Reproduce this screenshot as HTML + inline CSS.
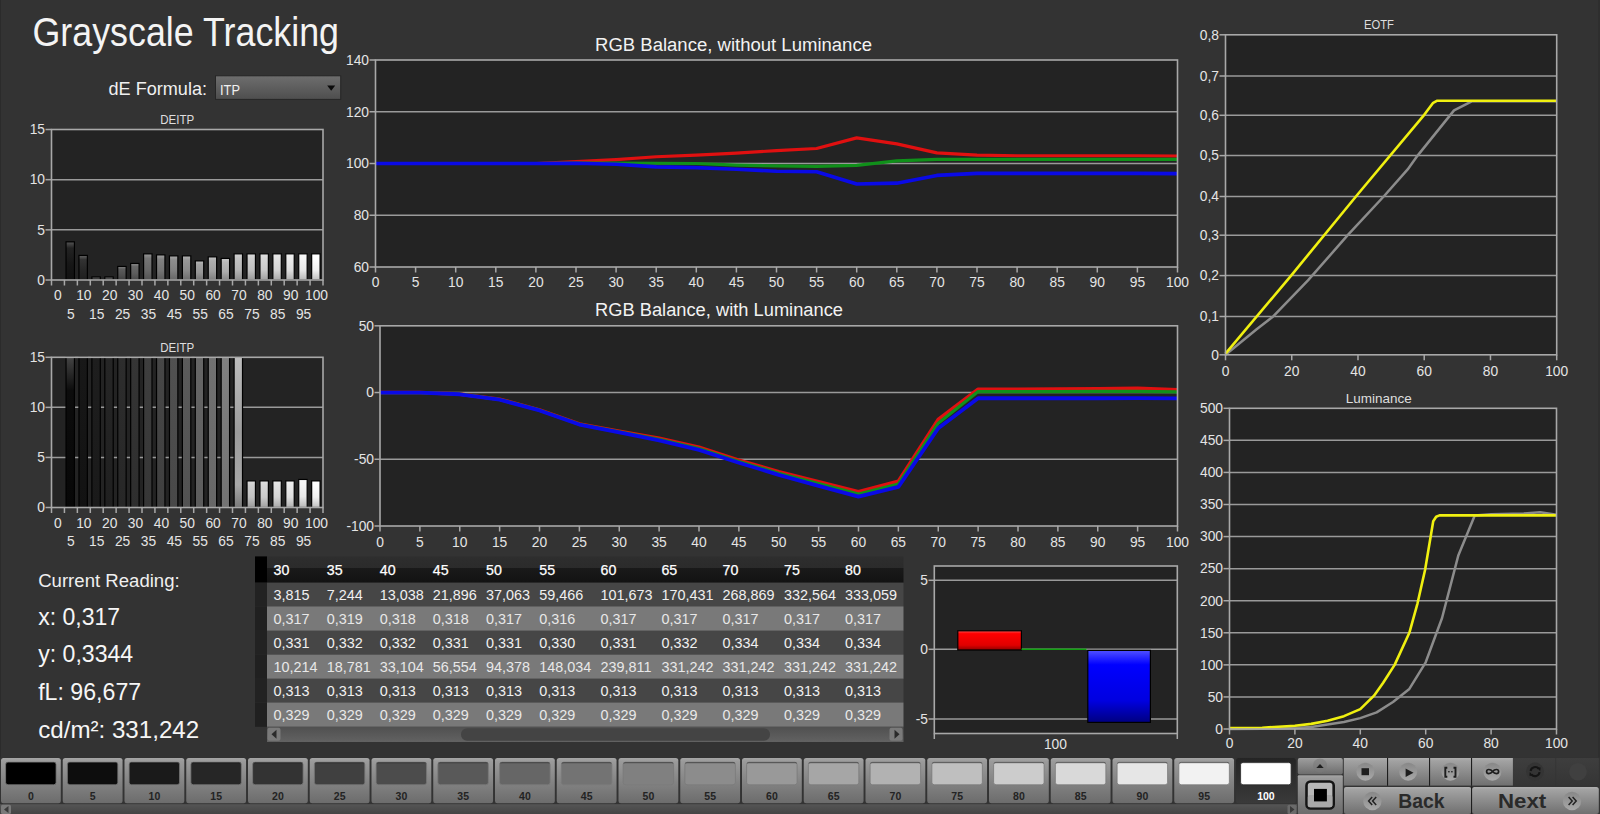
<!DOCTYPE html>
<html><head><meta charset="utf-8"><title>Grayscale Tracking</title>
<style>html,body{margin:0;padding:0;background:#333;overflow:hidden}svg{display:block}text{font-family:"Liberation Sans", sans-serif}</style>
</head><body>
<svg width="1600" height="814" viewBox="0 0 1600 814" style='font-family:"Liberation Sans", sans-serif'>
<rect x="0.00" y="0.00" width="1600.00" height="814.00" fill="#333333" />
<rect x="0.00" y="0.00" width="1.00" height="758.00" fill="#2b2b2b" />
<rect x="1598.00" y="0.00" width="2.00" height="758.00" fill="#2e2e2e" />
<text x="32.50" y="45.50" font-size="40.5" fill="#f4f4f4" text-anchor="start" font-weight="normal" textLength="306.50" lengthAdjust="spacingAndGlyphs" >Grayscale Tracking</text>
<text x="108.50" y="94.50" font-size="18.2" fill="#f0f0f0" text-anchor="start" font-weight="normal" textLength="98.50" lengthAdjust="spacingAndGlyphs" >dE Formula:</text>
<defs><linearGradient id="dd" x1="0" y1="0" x2="0" y2="1"><stop offset="0" stop-color="#6e6e6e"/><stop offset="1" stop-color="#4e4e4e"/></linearGradient></defs>
<rect x="215.50" y="75.80" width="125.20" height="23.60" fill="url(#dd)" stroke="#262626" stroke-width="1"/>
<text x="220.00" y="95.00" font-size="14" fill="#f0f0f0" text-anchor="start" font-weight="normal" textLength="20.00" lengthAdjust="spacingAndGlyphs" >ITP</text>
<path d="M327.2 85.6 L335.2 85.6 L331.2 90.8 Z" fill="#0a0a0a"/>
<defs>
<linearGradient id="shade" x1="0" y1="0" x2="0" y2="1">
<stop offset="0" stop-color="#fff" stop-opacity="0.25"/>
<stop offset="0.15" stop-color="#fff" stop-opacity="0.05"/>
<stop offset="0.6" stop-color="#000" stop-opacity="0.05"/>
<stop offset="1" stop-color="#000" stop-opacity="0.25"/>
</linearGradient>
</defs>
<text x="177.20" y="124.30" font-size="13" fill="#dedede" text-anchor="middle" font-weight="normal" textLength="34.00" lengthAdjust="spacingAndGlyphs" >DEITP</text>
<rect x="51.50" y="129.50" width="271.50" height="150.50" fill="#232323" />
<line x1="51.50" y1="179.67" x2="323.00" y2="179.67" stroke="#9a9a9a" stroke-width="1.5" />
<line x1="51.50" y1="229.83" x2="323.00" y2="229.83" stroke="#9a9a9a" stroke-width="1.5" />
<rect x="66.03" y="241.87" width="8.4" height="38.13" fill="rgb(23,23,23)" stroke="#000" stroke-width="1.2"/>
<rect x="66.63" y="242.47" width="7.2" height="37.53" fill="url(#shade)"/>
<rect x="78.96" y="255.42" width="8.4" height="24.58" fill="rgb(40,40,40)" stroke="#000" stroke-width="1.2"/>
<rect x="79.56" y="256.02" width="7.2" height="23.98" fill="url(#shade)"/>
<rect x="91.89" y="276.99" width="8.4" height="3.01" fill="rgb(56,56,56)" stroke="#000" stroke-width="1.2"/>
<rect x="92.49" y="277.59" width="7.2" height="2.41" fill="url(#shade)"/>
<rect x="104.81" y="276.99" width="8.4" height="3.01" fill="rgb(70,70,70)" stroke="#000" stroke-width="1.2"/>
<rect x="105.41" y="277.59" width="7.2" height="2.41" fill="url(#shade)"/>
<rect x="117.74" y="266.45" width="8.4" height="13.55" fill="rgb(84,84,84)" stroke="#000" stroke-width="1.2"/>
<rect x="118.34" y="267.06" width="7.2" height="12.95" fill="url(#shade)"/>
<rect x="130.67" y="263.44" width="8.4" height="16.56" fill="rgb(97,97,97)" stroke="#000" stroke-width="1.2"/>
<rect x="131.27" y="264.05" width="7.2" height="15.96" fill="url(#shade)"/>
<rect x="143.60" y="253.91" width="8.4" height="26.09" fill="rgb(110,110,110)" stroke="#000" stroke-width="1.2"/>
<rect x="144.20" y="254.51" width="7.2" height="25.49" fill="url(#shade)"/>
<rect x="156.53" y="254.92" width="8.4" height="25.08" fill="rgb(123,123,123)" stroke="#000" stroke-width="1.2"/>
<rect x="157.13" y="255.52" width="7.2" height="24.48" fill="url(#shade)"/>
<rect x="169.46" y="255.92" width="8.4" height="24.08" fill="rgb(135,135,135)" stroke="#000" stroke-width="1.2"/>
<rect x="170.06" y="256.52" width="7.2" height="23.48" fill="url(#shade)"/>
<rect x="182.39" y="255.92" width="8.4" height="24.08" fill="rgb(146,146,146)" stroke="#000" stroke-width="1.2"/>
<rect x="182.99" y="256.52" width="7.2" height="23.48" fill="url(#shade)"/>
<rect x="195.31" y="260.94" width="8.4" height="19.06" fill="rgb(158,158,158)" stroke="#000" stroke-width="1.2"/>
<rect x="195.91" y="261.54" width="7.2" height="18.46" fill="url(#shade)"/>
<rect x="208.24" y="256.92" width="8.4" height="23.08" fill="rgb(169,169,169)" stroke="#000" stroke-width="1.2"/>
<rect x="208.84" y="257.52" width="7.2" height="22.48" fill="url(#shade)"/>
<rect x="221.17" y="258.43" width="8.4" height="21.57" fill="rgb(181,181,181)" stroke="#000" stroke-width="1.2"/>
<rect x="221.77" y="259.03" width="7.2" height="20.97" fill="url(#shade)"/>
<rect x="234.10" y="253.91" width="8.4" height="26.09" fill="rgb(192,192,192)" stroke="#000" stroke-width="1.2"/>
<rect x="234.70" y="254.51" width="7.2" height="25.49" fill="url(#shade)"/>
<rect x="247.03" y="253.91" width="8.4" height="26.09" fill="rgb(203,203,203)" stroke="#000" stroke-width="1.2"/>
<rect x="247.63" y="254.51" width="7.2" height="25.49" fill="url(#shade)"/>
<rect x="259.96" y="253.91" width="8.4" height="26.09" fill="rgb(213,213,213)" stroke="#000" stroke-width="1.2"/>
<rect x="260.56" y="254.51" width="7.2" height="25.49" fill="url(#shade)"/>
<rect x="272.89" y="253.91" width="8.4" height="26.09" fill="rgb(224,224,224)" stroke="#000" stroke-width="1.2"/>
<rect x="273.49" y="254.51" width="7.2" height="25.49" fill="url(#shade)"/>
<rect x="285.81" y="253.91" width="8.4" height="26.09" fill="rgb(234,234,234)" stroke="#000" stroke-width="1.2"/>
<rect x="286.41" y="254.51" width="7.2" height="25.49" fill="url(#shade)"/>
<rect x="298.74" y="253.91" width="8.4" height="26.09" fill="rgb(245,245,245)" stroke="#000" stroke-width="1.2"/>
<rect x="299.34" y="254.51" width="7.2" height="25.49" fill="url(#shade)"/>
<rect x="311.67" y="253.91" width="8.4" height="26.09" fill="rgb(255,255,255)" stroke="#000" stroke-width="1.2"/>
<rect x="312.27" y="254.51" width="7.2" height="25.49" fill="url(#shade)"/>
<rect x="51.50" y="129.50" width="271.50" height="150.50" fill="none" stroke="#a8a8a8" stroke-width="1.6"/>
<line x1="45.50" y1="129.50" x2="51.50" y2="129.50" stroke="#a8a8a8" stroke-width="1.5" />
<text x="45.00" y="134.30" font-size="13.8" fill="#e4e4e4" text-anchor="end" font-weight="normal" >15</text>
<line x1="45.50" y1="179.67" x2="51.50" y2="179.67" stroke="#a8a8a8" stroke-width="1.5" />
<text x="45.00" y="184.47" font-size="13.8" fill="#e4e4e4" text-anchor="end" font-weight="normal" >10</text>
<line x1="45.50" y1="229.83" x2="51.50" y2="229.83" stroke="#a8a8a8" stroke-width="1.5" />
<text x="45.00" y="234.63" font-size="13.8" fill="#e4e4e4" text-anchor="end" font-weight="normal" >5</text>
<line x1="45.50" y1="280.00" x2="51.50" y2="280.00" stroke="#a8a8a8" stroke-width="1.5" />
<text x="45.00" y="284.80" font-size="13.8" fill="#e4e4e4" text-anchor="end" font-weight="normal" >0</text>
<line x1="51.50" y1="280.00" x2="51.50" y2="285.50" stroke="#a8a8a8" stroke-width="1.5" />
<line x1="64.43" y1="280.00" x2="64.43" y2="285.50" stroke="#a8a8a8" stroke-width="1.5" />
<line x1="77.36" y1="280.00" x2="77.36" y2="285.50" stroke="#a8a8a8" stroke-width="1.5" />
<line x1="90.29" y1="280.00" x2="90.29" y2="285.50" stroke="#a8a8a8" stroke-width="1.5" />
<line x1="103.21" y1="280.00" x2="103.21" y2="285.50" stroke="#a8a8a8" stroke-width="1.5" />
<line x1="116.14" y1="280.00" x2="116.14" y2="285.50" stroke="#a8a8a8" stroke-width="1.5" />
<line x1="129.07" y1="280.00" x2="129.07" y2="285.50" stroke="#a8a8a8" stroke-width="1.5" />
<line x1="142.00" y1="280.00" x2="142.00" y2="285.50" stroke="#a8a8a8" stroke-width="1.5" />
<line x1="154.93" y1="280.00" x2="154.93" y2="285.50" stroke="#a8a8a8" stroke-width="1.5" />
<line x1="167.86" y1="280.00" x2="167.86" y2="285.50" stroke="#a8a8a8" stroke-width="1.5" />
<line x1="180.79" y1="280.00" x2="180.79" y2="285.50" stroke="#a8a8a8" stroke-width="1.5" />
<line x1="193.71" y1="280.00" x2="193.71" y2="285.50" stroke="#a8a8a8" stroke-width="1.5" />
<line x1="206.64" y1="280.00" x2="206.64" y2="285.50" stroke="#a8a8a8" stroke-width="1.5" />
<line x1="219.57" y1="280.00" x2="219.57" y2="285.50" stroke="#a8a8a8" stroke-width="1.5" />
<line x1="232.50" y1="280.00" x2="232.50" y2="285.50" stroke="#a8a8a8" stroke-width="1.5" />
<line x1="245.43" y1="280.00" x2="245.43" y2="285.50" stroke="#a8a8a8" stroke-width="1.5" />
<line x1="258.36" y1="280.00" x2="258.36" y2="285.50" stroke="#a8a8a8" stroke-width="1.5" />
<line x1="271.29" y1="280.00" x2="271.29" y2="285.50" stroke="#a8a8a8" stroke-width="1.5" />
<line x1="284.21" y1="280.00" x2="284.21" y2="285.50" stroke="#a8a8a8" stroke-width="1.5" />
<line x1="297.14" y1="280.00" x2="297.14" y2="285.50" stroke="#a8a8a8" stroke-width="1.5" />
<line x1="310.07" y1="280.00" x2="310.07" y2="285.50" stroke="#a8a8a8" stroke-width="1.5" />
<line x1="323.00" y1="280.00" x2="323.00" y2="285.50" stroke="#a8a8a8" stroke-width="1.5" />
<text x="57.96" y="300.30" font-size="13.8" fill="#e4e4e4" text-anchor="middle" font-weight="normal" >0</text>
<text x="70.89" y="319.30" font-size="13.8" fill="#e4e4e4" text-anchor="middle" font-weight="normal" >5</text>
<text x="83.82" y="300.30" font-size="13.8" fill="#e4e4e4" text-anchor="middle" font-weight="normal" >10</text>
<text x="96.75" y="319.30" font-size="13.8" fill="#e4e4e4" text-anchor="middle" font-weight="normal" >15</text>
<text x="109.68" y="300.30" font-size="13.8" fill="#e4e4e4" text-anchor="middle" font-weight="normal" >20</text>
<text x="122.61" y="319.30" font-size="13.8" fill="#e4e4e4" text-anchor="middle" font-weight="normal" >25</text>
<text x="135.54" y="300.30" font-size="13.8" fill="#e4e4e4" text-anchor="middle" font-weight="normal" >30</text>
<text x="148.46" y="319.30" font-size="13.8" fill="#e4e4e4" text-anchor="middle" font-weight="normal" >35</text>
<text x="161.39" y="300.30" font-size="13.8" fill="#e4e4e4" text-anchor="middle" font-weight="normal" >40</text>
<text x="174.32" y="319.30" font-size="13.8" fill="#e4e4e4" text-anchor="middle" font-weight="normal" >45</text>
<text x="187.25" y="300.30" font-size="13.8" fill="#e4e4e4" text-anchor="middle" font-weight="normal" >50</text>
<text x="200.18" y="319.30" font-size="13.8" fill="#e4e4e4" text-anchor="middle" font-weight="normal" >55</text>
<text x="213.11" y="300.30" font-size="13.8" fill="#e4e4e4" text-anchor="middle" font-weight="normal" >60</text>
<text x="226.04" y="319.30" font-size="13.8" fill="#e4e4e4" text-anchor="middle" font-weight="normal" >65</text>
<text x="238.96" y="300.30" font-size="13.8" fill="#e4e4e4" text-anchor="middle" font-weight="normal" >70</text>
<text x="251.89" y="319.30" font-size="13.8" fill="#e4e4e4" text-anchor="middle" font-weight="normal" >75</text>
<text x="264.82" y="300.30" font-size="13.8" fill="#e4e4e4" text-anchor="middle" font-weight="normal" >80</text>
<text x="277.75" y="319.30" font-size="13.8" fill="#e4e4e4" text-anchor="middle" font-weight="normal" >85</text>
<text x="290.68" y="300.30" font-size="13.8" fill="#e4e4e4" text-anchor="middle" font-weight="normal" >90</text>
<text x="303.61" y="319.30" font-size="13.8" fill="#e4e4e4" text-anchor="middle" font-weight="normal" >95</text>
<text x="316.54" y="300.30" font-size="13.8" fill="#e4e4e4" text-anchor="middle" font-weight="normal" >100</text>
<text x="177.20" y="351.90" font-size="13" fill="#dedede" text-anchor="middle" font-weight="normal" textLength="34.00" lengthAdjust="spacingAndGlyphs" >DEITP</text>
<rect x="51.50" y="357.30" width="271.50" height="150.20" fill="#232323" />
<line x1="51.50" y1="407.37" x2="323.00" y2="407.37" stroke="#9a9a9a" stroke-width="1.5" />
<line x1="51.50" y1="457.43" x2="323.00" y2="457.43" stroke="#9a9a9a" stroke-width="1.5" />
<defs><linearGradient id="tb1" x1="0" y1="0" x2="0" y2="1"><stop offset="0" stop-color="#444"/><stop offset="0.22" stop-color="#0c0c0c"/><stop offset="1" stop-color="#070707"/></linearGradient></defs>
<rect x="66.03" y="357.30" width="8.4" height="150.20" fill="url(#tb1)" stroke="#000" stroke-width="1.2"/>
<defs><linearGradient id="tb2" x1="0" y1="0" x2="0" y2="1"><stop offset="0" stop-color="#181818"/><stop offset="1" stop-color="#121212"/></linearGradient></defs>
<rect x="78.96" y="357.30" width="8.4" height="150.20" fill="url(#tb2)" stroke="#000" stroke-width="1.2"/>
<defs><linearGradient id="tb3" x1="0" y1="0" x2="0" y2="1"><stop offset="0" stop-color="#1e1e1e"/><stop offset="1" stop-color="#1a1a1a"/></linearGradient></defs>
<rect x="91.89" y="357.30" width="8.4" height="150.20" fill="url(#tb3)" stroke="#000" stroke-width="1.2"/>
<defs><linearGradient id="tb4" x1="0" y1="0" x2="0" y2="1"><stop offset="0" stop-color="#262626"/><stop offset="1" stop-color="#202020"/></linearGradient></defs>
<rect x="104.81" y="357.30" width="8.4" height="150.20" fill="url(#tb4)" stroke="#000" stroke-width="1.2"/>
<defs><linearGradient id="tb5" x1="0" y1="0" x2="0" y2="1"><stop offset="0" stop-color="#2d2d2d"/><stop offset="1" stop-color="#272727"/></linearGradient></defs>
<rect x="117.74" y="357.30" width="8.4" height="150.20" fill="url(#tb5)" stroke="#000" stroke-width="1.2"/>
<defs><linearGradient id="tb6" x1="0" y1="0" x2="0" y2="1"><stop offset="0" stop-color="#353535"/><stop offset="1" stop-color="#2e2e2e"/></linearGradient></defs>
<rect x="130.67" y="357.30" width="8.4" height="150.20" fill="url(#tb6)" stroke="#000" stroke-width="1.2"/>
<defs><linearGradient id="tb7" x1="0" y1="0" x2="0" y2="1"><stop offset="0" stop-color="#3e3e3e"/><stop offset="1" stop-color="#363636"/></linearGradient></defs>
<rect x="143.60" y="357.30" width="8.4" height="150.20" fill="url(#tb7)" stroke="#000" stroke-width="1.2"/>
<defs><linearGradient id="tb8" x1="0" y1="0" x2="0" y2="1"><stop offset="0" stop-color="#474747"/><stop offset="1" stop-color="#3f3f3f"/></linearGradient></defs>
<rect x="156.53" y="357.30" width="8.4" height="150.20" fill="url(#tb8)" stroke="#000" stroke-width="1.2"/>
<defs><linearGradient id="tb9" x1="0" y1="0" x2="0" y2="1"><stop offset="0" stop-color="#515151"/><stop offset="1" stop-color="#484848"/></linearGradient></defs>
<rect x="169.46" y="357.30" width="8.4" height="150.20" fill="url(#tb9)" stroke="#000" stroke-width="1.2"/>
<defs><linearGradient id="tb10" x1="0" y1="0" x2="0" y2="1"><stop offset="0" stop-color="#5b5b5b"/><stop offset="1" stop-color="#525252"/></linearGradient></defs>
<rect x="182.39" y="357.30" width="8.4" height="150.20" fill="url(#tb10)" stroke="#000" stroke-width="1.2"/>
<defs><linearGradient id="tb11" x1="0" y1="0" x2="0" y2="1"><stop offset="0" stop-color="#666"/><stop offset="1" stop-color="#5c5c5c"/></linearGradient></defs>
<rect x="195.31" y="357.30" width="8.4" height="150.20" fill="url(#tb11)" stroke="#000" stroke-width="1.2"/>
<defs><linearGradient id="tb12" x1="0" y1="0" x2="0" y2="1"><stop offset="0" stop-color="#727272"/><stop offset="1" stop-color="#676767"/></linearGradient></defs>
<rect x="208.24" y="357.30" width="8.4" height="150.20" fill="url(#tb12)" stroke="#000" stroke-width="1.2"/>
<defs><linearGradient id="tb13" x1="0" y1="0" x2="0" y2="1"><stop offset="0" stop-color="#808080"/><stop offset="1" stop-color="#737373"/></linearGradient></defs>
<rect x="221.17" y="357.30" width="8.4" height="150.20" fill="url(#tb13)" stroke="#000" stroke-width="1.2"/>
<defs><linearGradient id="tb14" x1="0" y1="0" x2="0" y2="1"><stop offset="0" stop-color="#bdbdbd"/><stop offset="0.5" stop-color="#9c9c9c"/><stop offset="0.85" stop-color="#a8a8a8"/><stop offset="1" stop-color="#7a7a7a"/></linearGradient></defs>
<rect x="234.10" y="357.30" width="8.4" height="150.20" fill="url(#tb14)" stroke="#000" stroke-width="1.2"/>
<rect x="247.03" y="480.96" width="8.4" height="26.54" fill="rgb(203,203,203)" stroke="#000" stroke-width="1.2"/>
<rect x="247.63" y="481.56" width="7.2" height="25.94" fill="url(#shade)"/>
<rect x="259.96" y="480.96" width="8.4" height="26.54" fill="rgb(213,213,213)" stroke="#000" stroke-width="1.2"/>
<rect x="260.56" y="481.56" width="7.2" height="25.94" fill="url(#shade)"/>
<rect x="272.89" y="480.96" width="8.4" height="26.54" fill="rgb(224,224,224)" stroke="#000" stroke-width="1.2"/>
<rect x="273.49" y="481.56" width="7.2" height="25.94" fill="url(#shade)"/>
<rect x="285.81" y="480.96" width="8.4" height="26.54" fill="rgb(234,234,234)" stroke="#000" stroke-width="1.2"/>
<rect x="286.41" y="481.56" width="7.2" height="25.94" fill="url(#shade)"/>
<rect x="298.74" y="479.46" width="8.4" height="28.04" fill="rgb(245,245,245)" stroke="#000" stroke-width="1.2"/>
<rect x="299.34" y="480.06" width="7.2" height="27.44" fill="url(#shade)"/>
<rect x="311.67" y="480.96" width="8.4" height="26.54" fill="rgb(255,255,255)" stroke="#000" stroke-width="1.2"/>
<rect x="312.27" y="481.56" width="7.2" height="25.94" fill="url(#shade)"/>
<rect x="51.50" y="357.30" width="271.50" height="150.20" fill="none" stroke="#a8a8a8" stroke-width="1.6"/>
<line x1="45.50" y1="357.30" x2="51.50" y2="357.30" stroke="#a8a8a8" stroke-width="1.5" />
<text x="45.00" y="362.10" font-size="13.8" fill="#e4e4e4" text-anchor="end" font-weight="normal" >15</text>
<line x1="45.50" y1="407.37" x2="51.50" y2="407.37" stroke="#a8a8a8" stroke-width="1.5" />
<text x="45.00" y="412.17" font-size="13.8" fill="#e4e4e4" text-anchor="end" font-weight="normal" >10</text>
<line x1="45.50" y1="457.43" x2="51.50" y2="457.43" stroke="#a8a8a8" stroke-width="1.5" />
<text x="45.00" y="462.23" font-size="13.8" fill="#e4e4e4" text-anchor="end" font-weight="normal" >5</text>
<line x1="45.50" y1="507.50" x2="51.50" y2="507.50" stroke="#a8a8a8" stroke-width="1.5" />
<text x="45.00" y="512.30" font-size="13.8" fill="#e4e4e4" text-anchor="end" font-weight="normal" >0</text>
<line x1="51.50" y1="507.50" x2="51.50" y2="513.00" stroke="#a8a8a8" stroke-width="1.5" />
<line x1="64.43" y1="507.50" x2="64.43" y2="513.00" stroke="#a8a8a8" stroke-width="1.5" />
<line x1="77.36" y1="507.50" x2="77.36" y2="513.00" stroke="#a8a8a8" stroke-width="1.5" />
<line x1="90.29" y1="507.50" x2="90.29" y2="513.00" stroke="#a8a8a8" stroke-width="1.5" />
<line x1="103.21" y1="507.50" x2="103.21" y2="513.00" stroke="#a8a8a8" stroke-width="1.5" />
<line x1="116.14" y1="507.50" x2="116.14" y2="513.00" stroke="#a8a8a8" stroke-width="1.5" />
<line x1="129.07" y1="507.50" x2="129.07" y2="513.00" stroke="#a8a8a8" stroke-width="1.5" />
<line x1="142.00" y1="507.50" x2="142.00" y2="513.00" stroke="#a8a8a8" stroke-width="1.5" />
<line x1="154.93" y1="507.50" x2="154.93" y2="513.00" stroke="#a8a8a8" stroke-width="1.5" />
<line x1="167.86" y1="507.50" x2="167.86" y2="513.00" stroke="#a8a8a8" stroke-width="1.5" />
<line x1="180.79" y1="507.50" x2="180.79" y2="513.00" stroke="#a8a8a8" stroke-width="1.5" />
<line x1="193.71" y1="507.50" x2="193.71" y2="513.00" stroke="#a8a8a8" stroke-width="1.5" />
<line x1="206.64" y1="507.50" x2="206.64" y2="513.00" stroke="#a8a8a8" stroke-width="1.5" />
<line x1="219.57" y1="507.50" x2="219.57" y2="513.00" stroke="#a8a8a8" stroke-width="1.5" />
<line x1="232.50" y1="507.50" x2="232.50" y2="513.00" stroke="#a8a8a8" stroke-width="1.5" />
<line x1="245.43" y1="507.50" x2="245.43" y2="513.00" stroke="#a8a8a8" stroke-width="1.5" />
<line x1="258.36" y1="507.50" x2="258.36" y2="513.00" stroke="#a8a8a8" stroke-width="1.5" />
<line x1="271.29" y1="507.50" x2="271.29" y2="513.00" stroke="#a8a8a8" stroke-width="1.5" />
<line x1="284.21" y1="507.50" x2="284.21" y2="513.00" stroke="#a8a8a8" stroke-width="1.5" />
<line x1="297.14" y1="507.50" x2="297.14" y2="513.00" stroke="#a8a8a8" stroke-width="1.5" />
<line x1="310.07" y1="507.50" x2="310.07" y2="513.00" stroke="#a8a8a8" stroke-width="1.5" />
<line x1="323.00" y1="507.50" x2="323.00" y2="513.00" stroke="#a8a8a8" stroke-width="1.5" />
<text x="57.96" y="528.00" font-size="13.8" fill="#e4e4e4" text-anchor="middle" font-weight="normal" >0</text>
<text x="70.89" y="546.20" font-size="13.8" fill="#e4e4e4" text-anchor="middle" font-weight="normal" >5</text>
<text x="83.82" y="528.00" font-size="13.8" fill="#e4e4e4" text-anchor="middle" font-weight="normal" >10</text>
<text x="96.75" y="546.20" font-size="13.8" fill="#e4e4e4" text-anchor="middle" font-weight="normal" >15</text>
<text x="109.68" y="528.00" font-size="13.8" fill="#e4e4e4" text-anchor="middle" font-weight="normal" >20</text>
<text x="122.61" y="546.20" font-size="13.8" fill="#e4e4e4" text-anchor="middle" font-weight="normal" >25</text>
<text x="135.54" y="528.00" font-size="13.8" fill="#e4e4e4" text-anchor="middle" font-weight="normal" >30</text>
<text x="148.46" y="546.20" font-size="13.8" fill="#e4e4e4" text-anchor="middle" font-weight="normal" >35</text>
<text x="161.39" y="528.00" font-size="13.8" fill="#e4e4e4" text-anchor="middle" font-weight="normal" >40</text>
<text x="174.32" y="546.20" font-size="13.8" fill="#e4e4e4" text-anchor="middle" font-weight="normal" >45</text>
<text x="187.25" y="528.00" font-size="13.8" fill="#e4e4e4" text-anchor="middle" font-weight="normal" >50</text>
<text x="200.18" y="546.20" font-size="13.8" fill="#e4e4e4" text-anchor="middle" font-weight="normal" >55</text>
<text x="213.11" y="528.00" font-size="13.8" fill="#e4e4e4" text-anchor="middle" font-weight="normal" >60</text>
<text x="226.04" y="546.20" font-size="13.8" fill="#e4e4e4" text-anchor="middle" font-weight="normal" >65</text>
<text x="238.96" y="528.00" font-size="13.8" fill="#e4e4e4" text-anchor="middle" font-weight="normal" >70</text>
<text x="251.89" y="546.20" font-size="13.8" fill="#e4e4e4" text-anchor="middle" font-weight="normal" >75</text>
<text x="264.82" y="528.00" font-size="13.8" fill="#e4e4e4" text-anchor="middle" font-weight="normal" >80</text>
<text x="277.75" y="546.20" font-size="13.8" fill="#e4e4e4" text-anchor="middle" font-weight="normal" >85</text>
<text x="290.68" y="528.00" font-size="13.8" fill="#e4e4e4" text-anchor="middle" font-weight="normal" >90</text>
<text x="303.61" y="546.20" font-size="13.8" fill="#e4e4e4" text-anchor="middle" font-weight="normal" >95</text>
<text x="316.54" y="528.00" font-size="13.8" fill="#e4e4e4" text-anchor="middle" font-weight="normal" >100</text>
<text x="733.50" y="50.60" font-size="18" fill="#f2f2f2" text-anchor="middle" font-weight="normal" textLength="277.00" lengthAdjust="spacingAndGlyphs" >RGB Balance, without Luminance</text>
<rect x="375.50" y="60.00" width="802.00" height="207.00" fill="#232323" />
<line x1="375.50" y1="111.75" x2="1177.50" y2="111.75" stroke="#9a9a9a" stroke-width="1.5" />
<line x1="375.50" y1="163.50" x2="1177.50" y2="163.50" stroke="#9a9a9a" stroke-width="1.5" />
<line x1="375.50" y1="215.25" x2="1177.50" y2="215.25" stroke="#9a9a9a" stroke-width="1.5" />
<polyline points="375.50,163.50 415.60,163.50 455.70,163.50 495.80,163.50 535.90,163.50 576.00,161.69 616.10,159.62 656.20,156.77 696.30,155.22 736.40,153.15 776.50,150.56 816.60,148.49 856.70,137.88 896.80,143.84 936.90,152.89 977.00,155.22 1017.10,155.74 1057.20,155.74 1097.30,155.74 1137.40,155.74 1177.50,156.00" fill="none" stroke="#e01010" stroke-width="3.2" stroke-linejoin="round" stroke-linecap="butt" />
<polyline points="375.50,163.50 415.60,163.50 455.70,163.50 495.80,163.50 535.90,163.50 576.00,162.98 616.10,162.98 656.20,163.24 696.30,163.50 736.40,165.05 776.50,165.83 816.60,166.35 856.70,165.31 896.80,160.91 936.90,159.36 977.00,159.36 1017.10,159.36 1057.20,159.36 1097.30,159.36 1137.40,159.36 1177.50,159.36" fill="none" stroke="#10901a" stroke-width="3.2" stroke-linejoin="round" stroke-linecap="butt" />
<polyline points="375.50,163.50 415.60,163.50 455.70,163.50 495.80,163.50 535.90,163.50 576.00,163.24 616.10,164.28 656.20,166.86 696.30,167.64 736.40,169.19 776.50,171.26 816.60,171.78 856.70,183.94 896.80,183.16 936.90,175.40 977.00,173.33 1017.10,173.33 1057.20,173.33 1097.30,173.33 1137.40,173.33 1177.50,173.59" fill="none" stroke="#0a0ae6" stroke-width="3.6" stroke-linejoin="round" stroke-linecap="butt" />
<rect x="375.50" y="60.00" width="802.00" height="207.00" fill="none" stroke="#a8a8a8" stroke-width="1.6"/>
<line x1="369.50" y1="60.00" x2="375.50" y2="60.00" stroke="#a8a8a8" stroke-width="1.5" />
<text x="369.00" y="64.80" font-size="13.8" fill="#e4e4e4" text-anchor="end" font-weight="normal" >140</text>
<line x1="369.50" y1="111.75" x2="375.50" y2="111.75" stroke="#a8a8a8" stroke-width="1.5" />
<text x="369.00" y="116.55" font-size="13.8" fill="#e4e4e4" text-anchor="end" font-weight="normal" >120</text>
<line x1="369.50" y1="163.50" x2="375.50" y2="163.50" stroke="#a8a8a8" stroke-width="1.5" />
<text x="369.00" y="168.30" font-size="13.8" fill="#e4e4e4" text-anchor="end" font-weight="normal" >100</text>
<line x1="369.50" y1="215.25" x2="375.50" y2="215.25" stroke="#a8a8a8" stroke-width="1.5" />
<text x="369.00" y="220.05" font-size="13.8" fill="#e4e4e4" text-anchor="end" font-weight="normal" >80</text>
<line x1="369.50" y1="267.00" x2="375.50" y2="267.00" stroke="#a8a8a8" stroke-width="1.5" />
<text x="369.00" y="271.80" font-size="13.8" fill="#e4e4e4" text-anchor="end" font-weight="normal" >60</text>
<line x1="375.50" y1="267.00" x2="375.50" y2="272.50" stroke="#a8a8a8" stroke-width="1.5" />
<text x="375.50" y="287.20" font-size="13.8" fill="#e4e4e4" text-anchor="middle" font-weight="normal" >0</text>
<line x1="415.60" y1="267.00" x2="415.60" y2="272.50" stroke="#a8a8a8" stroke-width="1.5" />
<text x="415.60" y="287.20" font-size="13.8" fill="#e4e4e4" text-anchor="middle" font-weight="normal" >5</text>
<line x1="455.70" y1="267.00" x2="455.70" y2="272.50" stroke="#a8a8a8" stroke-width="1.5" />
<text x="455.70" y="287.20" font-size="13.8" fill="#e4e4e4" text-anchor="middle" font-weight="normal" >10</text>
<line x1="495.80" y1="267.00" x2="495.80" y2="272.50" stroke="#a8a8a8" stroke-width="1.5" />
<text x="495.80" y="287.20" font-size="13.8" fill="#e4e4e4" text-anchor="middle" font-weight="normal" >15</text>
<line x1="535.90" y1="267.00" x2="535.90" y2="272.50" stroke="#a8a8a8" stroke-width="1.5" />
<text x="535.90" y="287.20" font-size="13.8" fill="#e4e4e4" text-anchor="middle" font-weight="normal" >20</text>
<line x1="576.00" y1="267.00" x2="576.00" y2="272.50" stroke="#a8a8a8" stroke-width="1.5" />
<text x="576.00" y="287.20" font-size="13.8" fill="#e4e4e4" text-anchor="middle" font-weight="normal" >25</text>
<line x1="616.10" y1="267.00" x2="616.10" y2="272.50" stroke="#a8a8a8" stroke-width="1.5" />
<text x="616.10" y="287.20" font-size="13.8" fill="#e4e4e4" text-anchor="middle" font-weight="normal" >30</text>
<line x1="656.20" y1="267.00" x2="656.20" y2="272.50" stroke="#a8a8a8" stroke-width="1.5" />
<text x="656.20" y="287.20" font-size="13.8" fill="#e4e4e4" text-anchor="middle" font-weight="normal" >35</text>
<line x1="696.30" y1="267.00" x2="696.30" y2="272.50" stroke="#a8a8a8" stroke-width="1.5" />
<text x="696.30" y="287.20" font-size="13.8" fill="#e4e4e4" text-anchor="middle" font-weight="normal" >40</text>
<line x1="736.40" y1="267.00" x2="736.40" y2="272.50" stroke="#a8a8a8" stroke-width="1.5" />
<text x="736.40" y="287.20" font-size="13.8" fill="#e4e4e4" text-anchor="middle" font-weight="normal" >45</text>
<line x1="776.50" y1="267.00" x2="776.50" y2="272.50" stroke="#a8a8a8" stroke-width="1.5" />
<text x="776.50" y="287.20" font-size="13.8" fill="#e4e4e4" text-anchor="middle" font-weight="normal" >50</text>
<line x1="816.60" y1="267.00" x2="816.60" y2="272.50" stroke="#a8a8a8" stroke-width="1.5" />
<text x="816.60" y="287.20" font-size="13.8" fill="#e4e4e4" text-anchor="middle" font-weight="normal" >55</text>
<line x1="856.70" y1="267.00" x2="856.70" y2="272.50" stroke="#a8a8a8" stroke-width="1.5" />
<text x="856.70" y="287.20" font-size="13.8" fill="#e4e4e4" text-anchor="middle" font-weight="normal" >60</text>
<line x1="896.80" y1="267.00" x2="896.80" y2="272.50" stroke="#a8a8a8" stroke-width="1.5" />
<text x="896.80" y="287.20" font-size="13.8" fill="#e4e4e4" text-anchor="middle" font-weight="normal" >65</text>
<line x1="936.90" y1="267.00" x2="936.90" y2="272.50" stroke="#a8a8a8" stroke-width="1.5" />
<text x="936.90" y="287.20" font-size="13.8" fill="#e4e4e4" text-anchor="middle" font-weight="normal" >70</text>
<line x1="977.00" y1="267.00" x2="977.00" y2="272.50" stroke="#a8a8a8" stroke-width="1.5" />
<text x="977.00" y="287.20" font-size="13.8" fill="#e4e4e4" text-anchor="middle" font-weight="normal" >75</text>
<line x1="1017.10" y1="267.00" x2="1017.10" y2="272.50" stroke="#a8a8a8" stroke-width="1.5" />
<text x="1017.10" y="287.20" font-size="13.8" fill="#e4e4e4" text-anchor="middle" font-weight="normal" >80</text>
<line x1="1057.20" y1="267.00" x2="1057.20" y2="272.50" stroke="#a8a8a8" stroke-width="1.5" />
<text x="1057.20" y="287.20" font-size="13.8" fill="#e4e4e4" text-anchor="middle" font-weight="normal" >85</text>
<line x1="1097.30" y1="267.00" x2="1097.30" y2="272.50" stroke="#a8a8a8" stroke-width="1.5" />
<text x="1097.30" y="287.20" font-size="13.8" fill="#e4e4e4" text-anchor="middle" font-weight="normal" >90</text>
<line x1="1137.40" y1="267.00" x2="1137.40" y2="272.50" stroke="#a8a8a8" stroke-width="1.5" />
<text x="1137.40" y="287.20" font-size="13.8" fill="#e4e4e4" text-anchor="middle" font-weight="normal" >95</text>
<line x1="1177.50" y1="267.00" x2="1177.50" y2="272.50" stroke="#a8a8a8" stroke-width="1.5" />
<text x="1177.50" y="287.20" font-size="13.8" fill="#e4e4e4" text-anchor="middle" font-weight="normal" >100</text>
<text x="719.00" y="316.30" font-size="18" fill="#f2f2f2" text-anchor="middle" font-weight="normal" textLength="248.00" lengthAdjust="spacingAndGlyphs" >RGB Balance, with Luminance</text>
<rect x="380.00" y="325.80" width="797.50" height="200.20" fill="#232323" />
<line x1="380.00" y1="392.53" x2="1177.50" y2="392.53" stroke="#9a9a9a" stroke-width="1.5" />
<line x1="380.00" y1="459.27" x2="1177.50" y2="459.27" stroke="#9a9a9a" stroke-width="1.5" />
<polyline points="380.00,392.53 419.88,392.53 459.75,394.13 499.62,399.21 539.50,409.88 579.38,423.90 619.25,431.24 659.12,438.18 699.00,447.25 738.88,460.20 778.75,471.68 818.62,481.69 858.50,491.83 898.38,481.16 938.25,419.49 978.12,389.20 1018.00,389.20 1057.88,389.06 1097.75,388.80 1137.62,388.26 1177.50,389.86" fill="none" stroke="#e01010" stroke-width="3.6" stroke-linejoin="round" stroke-linecap="butt" />
<polyline points="380.00,392.53 419.88,392.53 459.75,394.13 499.62,399.47 539.50,410.15 579.38,424.30 619.25,431.91 659.12,439.25 699.00,448.59 738.88,461.40 778.75,473.28 818.62,483.56 858.50,493.97 898.38,483.96 938.25,423.23 978.12,391.60 1018.00,391.60 1057.88,391.60 1097.75,391.47 1137.62,391.33 1177.50,391.87" fill="none" stroke="#10901a" stroke-width="3.2" stroke-linejoin="round" stroke-linecap="butt" />
<polyline points="380.00,392.53 419.88,392.53 459.75,394.27 499.62,399.74 539.50,410.42 579.38,424.57 619.25,432.31 659.12,440.31 699.00,449.92 738.88,462.74 778.75,474.88 818.62,485.83 858.50,496.64 898.38,486.89 938.25,428.30 978.12,398.27 1018.00,398.27 1057.88,398.27 1097.75,398.27 1137.62,398.14 1177.50,398.41" fill="none" stroke="#0a0ae6" stroke-width="3.8" stroke-linejoin="round" stroke-linecap="butt" />
<rect x="380.00" y="325.80" width="797.50" height="200.20" fill="none" stroke="#a8a8a8" stroke-width="1.6"/>
<line x1="374.50" y1="325.80" x2="380.00" y2="325.80" stroke="#a8a8a8" stroke-width="1.5" />
<text x="374.00" y="330.60" font-size="13.8" fill="#e4e4e4" text-anchor="end" font-weight="normal" >50</text>
<line x1="374.50" y1="392.53" x2="380.00" y2="392.53" stroke="#a8a8a8" stroke-width="1.5" />
<text x="374.00" y="397.33" font-size="13.8" fill="#e4e4e4" text-anchor="end" font-weight="normal" >0</text>
<line x1="374.50" y1="459.27" x2="380.00" y2="459.27" stroke="#a8a8a8" stroke-width="1.5" />
<text x="374.00" y="464.07" font-size="13.8" fill="#e4e4e4" text-anchor="end" font-weight="normal" >-50</text>
<line x1="374.50" y1="526.00" x2="380.00" y2="526.00" stroke="#a8a8a8" stroke-width="1.5" />
<text x="374.00" y="530.80" font-size="13.8" fill="#e4e4e4" text-anchor="end" font-weight="normal" >-100</text>
<line x1="380.00" y1="526.00" x2="380.00" y2="531.50" stroke="#a8a8a8" stroke-width="1.5" />
<text x="380.00" y="546.50" font-size="13.8" fill="#e4e4e4" text-anchor="middle" font-weight="normal" >0</text>
<line x1="419.88" y1="526.00" x2="419.88" y2="531.50" stroke="#a8a8a8" stroke-width="1.5" />
<text x="419.88" y="546.50" font-size="13.8" fill="#e4e4e4" text-anchor="middle" font-weight="normal" >5</text>
<line x1="459.75" y1="526.00" x2="459.75" y2="531.50" stroke="#a8a8a8" stroke-width="1.5" />
<text x="459.75" y="546.50" font-size="13.8" fill="#e4e4e4" text-anchor="middle" font-weight="normal" >10</text>
<line x1="499.62" y1="526.00" x2="499.62" y2="531.50" stroke="#a8a8a8" stroke-width="1.5" />
<text x="499.62" y="546.50" font-size="13.8" fill="#e4e4e4" text-anchor="middle" font-weight="normal" >15</text>
<line x1="539.50" y1="526.00" x2="539.50" y2="531.50" stroke="#a8a8a8" stroke-width="1.5" />
<text x="539.50" y="546.50" font-size="13.8" fill="#e4e4e4" text-anchor="middle" font-weight="normal" >20</text>
<line x1="579.38" y1="526.00" x2="579.38" y2="531.50" stroke="#a8a8a8" stroke-width="1.5" />
<text x="579.38" y="546.50" font-size="13.8" fill="#e4e4e4" text-anchor="middle" font-weight="normal" >25</text>
<line x1="619.25" y1="526.00" x2="619.25" y2="531.50" stroke="#a8a8a8" stroke-width="1.5" />
<text x="619.25" y="546.50" font-size="13.8" fill="#e4e4e4" text-anchor="middle" font-weight="normal" >30</text>
<line x1="659.12" y1="526.00" x2="659.12" y2="531.50" stroke="#a8a8a8" stroke-width="1.5" />
<text x="659.12" y="546.50" font-size="13.8" fill="#e4e4e4" text-anchor="middle" font-weight="normal" >35</text>
<line x1="699.00" y1="526.00" x2="699.00" y2="531.50" stroke="#a8a8a8" stroke-width="1.5" />
<text x="699.00" y="546.50" font-size="13.8" fill="#e4e4e4" text-anchor="middle" font-weight="normal" >40</text>
<line x1="738.88" y1="526.00" x2="738.88" y2="531.50" stroke="#a8a8a8" stroke-width="1.5" />
<text x="738.88" y="546.50" font-size="13.8" fill="#e4e4e4" text-anchor="middle" font-weight="normal" >45</text>
<line x1="778.75" y1="526.00" x2="778.75" y2="531.50" stroke="#a8a8a8" stroke-width="1.5" />
<text x="778.75" y="546.50" font-size="13.8" fill="#e4e4e4" text-anchor="middle" font-weight="normal" >50</text>
<line x1="818.62" y1="526.00" x2="818.62" y2="531.50" stroke="#a8a8a8" stroke-width="1.5" />
<text x="818.62" y="546.50" font-size="13.8" fill="#e4e4e4" text-anchor="middle" font-weight="normal" >55</text>
<line x1="858.50" y1="526.00" x2="858.50" y2="531.50" stroke="#a8a8a8" stroke-width="1.5" />
<text x="858.50" y="546.50" font-size="13.8" fill="#e4e4e4" text-anchor="middle" font-weight="normal" >60</text>
<line x1="898.38" y1="526.00" x2="898.38" y2="531.50" stroke="#a8a8a8" stroke-width="1.5" />
<text x="898.38" y="546.50" font-size="13.8" fill="#e4e4e4" text-anchor="middle" font-weight="normal" >65</text>
<line x1="938.25" y1="526.00" x2="938.25" y2="531.50" stroke="#a8a8a8" stroke-width="1.5" />
<text x="938.25" y="546.50" font-size="13.8" fill="#e4e4e4" text-anchor="middle" font-weight="normal" >70</text>
<line x1="978.12" y1="526.00" x2="978.12" y2="531.50" stroke="#a8a8a8" stroke-width="1.5" />
<text x="978.12" y="546.50" font-size="13.8" fill="#e4e4e4" text-anchor="middle" font-weight="normal" >75</text>
<line x1="1018.00" y1="526.00" x2="1018.00" y2="531.50" stroke="#a8a8a8" stroke-width="1.5" />
<text x="1018.00" y="546.50" font-size="13.8" fill="#e4e4e4" text-anchor="middle" font-weight="normal" >80</text>
<line x1="1057.88" y1="526.00" x2="1057.88" y2="531.50" stroke="#a8a8a8" stroke-width="1.5" />
<text x="1057.88" y="546.50" font-size="13.8" fill="#e4e4e4" text-anchor="middle" font-weight="normal" >85</text>
<line x1="1097.75" y1="526.00" x2="1097.75" y2="531.50" stroke="#a8a8a8" stroke-width="1.5" />
<text x="1097.75" y="546.50" font-size="13.8" fill="#e4e4e4" text-anchor="middle" font-weight="normal" >90</text>
<line x1="1137.62" y1="526.00" x2="1137.62" y2="531.50" stroke="#a8a8a8" stroke-width="1.5" />
<text x="1137.62" y="546.50" font-size="13.8" fill="#e4e4e4" text-anchor="middle" font-weight="normal" >95</text>
<line x1="1177.50" y1="526.00" x2="1177.50" y2="531.50" stroke="#a8a8a8" stroke-width="1.5" />
<text x="1177.50" y="546.50" font-size="13.8" fill="#e4e4e4" text-anchor="middle" font-weight="normal" >100</text>
<text x="1379.00" y="29.10" font-size="13" fill="#dedede" text-anchor="middle" font-weight="normal" textLength="30.00" lengthAdjust="spacingAndGlyphs" >EOTF</text>
<rect x="1225.50" y="34.80" width="331.20" height="320.00" fill="#232323" />
<line x1="1225.50" y1="316.50" x2="1556.70" y2="316.50" stroke="#9a9a9a" stroke-width="1.5" />
<line x1="1225.50" y1="275.60" x2="1556.70" y2="275.60" stroke="#9a9a9a" stroke-width="1.5" />
<line x1="1225.50" y1="235.20" x2="1556.70" y2="235.20" stroke="#9a9a9a" stroke-width="1.5" />
<line x1="1225.50" y1="196.50" x2="1556.70" y2="196.50" stroke="#9a9a9a" stroke-width="1.5" />
<line x1="1225.50" y1="155.60" x2="1556.70" y2="155.60" stroke="#9a9a9a" stroke-width="1.5" />
<line x1="1225.50" y1="115.30" x2="1556.70" y2="115.30" stroke="#9a9a9a" stroke-width="1.5" />
<line x1="1225.50" y1="76.00" x2="1556.70" y2="76.00" stroke="#9a9a9a" stroke-width="1.5" />
<polyline points="1225.50,354.80 1256.63,329.20 1273.19,316.40 1307.97,280.40 1347.71,235.20 1384.14,196.00 1407.66,169.40 1417.60,155.60 1454.03,110.40 1472.24,101.20 1556.70,101.20" fill="none" stroke="#8c8c8c" stroke-width="2.5" stroke-linejoin="round" stroke-linecap="butt" />
<polyline points="1225.50,353.60 1291.74,274.80 1357.98,194.00 1424.22,114.80 1433.16,102.80 1436.81,100.80 1556.70,100.80" fill="none" stroke="#f0f010" stroke-width="2.6" stroke-linejoin="round" stroke-linecap="butt" />
<rect x="1225.50" y="34.80" width="331.20" height="320.00" fill="none" stroke="#a8a8a8" stroke-width="1.6"/>
<line x1="1219.50" y1="354.80" x2="1225.50" y2="354.80" stroke="#a8a8a8" stroke-width="1.5" />
<text x="1219.00" y="359.60" font-size="13.8" fill="#e4e4e4" text-anchor="end" font-weight="normal" >0</text>
<line x1="1219.50" y1="316.50" x2="1225.50" y2="316.50" stroke="#a8a8a8" stroke-width="1.5" />
<text x="1219.00" y="321.30" font-size="13.8" fill="#e4e4e4" text-anchor="end" font-weight="normal" >0,1</text>
<line x1="1219.50" y1="275.60" x2="1225.50" y2="275.60" stroke="#a8a8a8" stroke-width="1.5" />
<text x="1219.00" y="280.40" font-size="13.8" fill="#e4e4e4" text-anchor="end" font-weight="normal" >0,2</text>
<line x1="1219.50" y1="235.20" x2="1225.50" y2="235.20" stroke="#a8a8a8" stroke-width="1.5" />
<text x="1219.00" y="240.00" font-size="13.8" fill="#e4e4e4" text-anchor="end" font-weight="normal" >0,3</text>
<line x1="1219.50" y1="196.50" x2="1225.50" y2="196.50" stroke="#a8a8a8" stroke-width="1.5" />
<text x="1219.00" y="201.30" font-size="13.8" fill="#e4e4e4" text-anchor="end" font-weight="normal" >0,4</text>
<line x1="1219.50" y1="155.60" x2="1225.50" y2="155.60" stroke="#a8a8a8" stroke-width="1.5" />
<text x="1219.00" y="160.40" font-size="13.8" fill="#e4e4e4" text-anchor="end" font-weight="normal" >0,5</text>
<line x1="1219.50" y1="115.30" x2="1225.50" y2="115.30" stroke="#a8a8a8" stroke-width="1.5" />
<text x="1219.00" y="120.10" font-size="13.8" fill="#e4e4e4" text-anchor="end" font-weight="normal" >0,6</text>
<line x1="1219.50" y1="76.00" x2="1225.50" y2="76.00" stroke="#a8a8a8" stroke-width="1.5" />
<text x="1219.00" y="80.80" font-size="13.8" fill="#e4e4e4" text-anchor="end" font-weight="normal" >0,7</text>
<line x1="1219.50" y1="34.80" x2="1225.50" y2="34.80" stroke="#a8a8a8" stroke-width="1.5" />
<text x="1219.00" y="39.60" font-size="13.8" fill="#e4e4e4" text-anchor="end" font-weight="normal" >0,8</text>
<line x1="1225.50" y1="354.80" x2="1225.50" y2="360.30" stroke="#a8a8a8" stroke-width="1.5" />
<text x="1225.50" y="375.50" font-size="13.8" fill="#e4e4e4" text-anchor="middle" font-weight="normal" >0</text>
<line x1="1291.74" y1="354.80" x2="1291.74" y2="360.30" stroke="#a8a8a8" stroke-width="1.5" />
<text x="1291.74" y="375.50" font-size="13.8" fill="#e4e4e4" text-anchor="middle" font-weight="normal" >20</text>
<line x1="1357.98" y1="354.80" x2="1357.98" y2="360.30" stroke="#a8a8a8" stroke-width="1.5" />
<text x="1357.98" y="375.50" font-size="13.8" fill="#e4e4e4" text-anchor="middle" font-weight="normal" >40</text>
<line x1="1424.22" y1="354.80" x2="1424.22" y2="360.30" stroke="#a8a8a8" stroke-width="1.5" />
<text x="1424.22" y="375.50" font-size="13.8" fill="#e4e4e4" text-anchor="middle" font-weight="normal" >60</text>
<line x1="1490.46" y1="354.80" x2="1490.46" y2="360.30" stroke="#a8a8a8" stroke-width="1.5" />
<text x="1490.46" y="375.50" font-size="13.8" fill="#e4e4e4" text-anchor="middle" font-weight="normal" >80</text>
<line x1="1556.70" y1="354.80" x2="1556.70" y2="360.30" stroke="#a8a8a8" stroke-width="1.5" />
<text x="1556.70" y="375.50" font-size="13.8" fill="#e4e4e4" text-anchor="middle" font-weight="normal" >100</text>
<text x="1378.80" y="403.30" font-size="13" fill="#dedede" text-anchor="middle" font-weight="normal" textLength="66.00" lengthAdjust="spacingAndGlyphs" >Luminance</text>
<rect x="1229.50" y="408.30" width="327.00" height="320.70" fill="#232323" />
<line x1="1229.50" y1="696.93" x2="1556.50" y2="696.93" stroke="#9a9a9a" stroke-width="1.5" />
<line x1="1229.50" y1="664.86" x2="1556.50" y2="664.86" stroke="#9a9a9a" stroke-width="1.5" />
<line x1="1229.50" y1="632.79" x2="1556.50" y2="632.79" stroke="#9a9a9a" stroke-width="1.5" />
<line x1="1229.50" y1="600.72" x2="1556.50" y2="600.72" stroke="#9a9a9a" stroke-width="1.5" />
<line x1="1229.50" y1="568.65" x2="1556.50" y2="568.65" stroke="#9a9a9a" stroke-width="1.5" />
<line x1="1229.50" y1="536.58" x2="1556.50" y2="536.58" stroke="#9a9a9a" stroke-width="1.5" />
<line x1="1229.50" y1="504.51" x2="1556.50" y2="504.51" stroke="#9a9a9a" stroke-width="1.5" />
<line x1="1229.50" y1="472.44" x2="1556.50" y2="472.44" stroke="#9a9a9a" stroke-width="1.5" />
<line x1="1229.50" y1="440.37" x2="1556.50" y2="440.37" stroke="#9a9a9a" stroke-width="1.5" />
<polyline points="1229.50,729.00 1262.20,728.81 1294.90,728.04 1311.25,727.08 1327.60,724.51 1343.95,721.94 1360.30,718.10 1376.65,712.32 1393.00,702.06 1409.35,688.91 1425.70,662.29 1442.05,618.04 1458.40,555.18 1474.75,515.41 1491.10,514.13 1523.80,513.49 1540.15,512.21 1556.50,514.77" fill="none" stroke="#8c8c8c" stroke-width="2.5" stroke-linejoin="round" stroke-linecap="butt" />
<polyline points="1229.50,728.04 1262.20,727.72 1294.90,725.79 1311.25,723.87 1327.60,720.66 1343.95,716.17 1360.30,709.12 1374.03,695.65 1383.19,682.82 1394.63,664.86 1409.35,632.79 1417.53,603.29 1425.05,569.93 1433.22,521.19 1436.16,516.70 1439.43,515.41 1556.50,515.41" fill="none" stroke="#f0f010" stroke-width="2.6" stroke-linejoin="round" stroke-linecap="butt" />
<rect x="1229.50" y="408.30" width="327.00" height="320.70" fill="none" stroke="#a8a8a8" stroke-width="1.6"/>
<line x1="1223.50" y1="729.00" x2="1229.50" y2="729.00" stroke="#a8a8a8" stroke-width="1.5" />
<text x="1223.00" y="733.80" font-size="13.8" fill="#e4e4e4" text-anchor="end" font-weight="normal" >0</text>
<line x1="1223.50" y1="696.93" x2="1229.50" y2="696.93" stroke="#a8a8a8" stroke-width="1.5" />
<text x="1223.00" y="701.73" font-size="13.8" fill="#e4e4e4" text-anchor="end" font-weight="normal" >50</text>
<line x1="1223.50" y1="664.86" x2="1229.50" y2="664.86" stroke="#a8a8a8" stroke-width="1.5" />
<text x="1223.00" y="669.66" font-size="13.8" fill="#e4e4e4" text-anchor="end" font-weight="normal" >100</text>
<line x1="1223.50" y1="632.79" x2="1229.50" y2="632.79" stroke="#a8a8a8" stroke-width="1.5" />
<text x="1223.00" y="637.59" font-size="13.8" fill="#e4e4e4" text-anchor="end" font-weight="normal" >150</text>
<line x1="1223.50" y1="600.72" x2="1229.50" y2="600.72" stroke="#a8a8a8" stroke-width="1.5" />
<text x="1223.00" y="605.52" font-size="13.8" fill="#e4e4e4" text-anchor="end" font-weight="normal" >200</text>
<line x1="1223.50" y1="568.65" x2="1229.50" y2="568.65" stroke="#a8a8a8" stroke-width="1.5" />
<text x="1223.00" y="573.45" font-size="13.8" fill="#e4e4e4" text-anchor="end" font-weight="normal" >250</text>
<line x1="1223.50" y1="536.58" x2="1229.50" y2="536.58" stroke="#a8a8a8" stroke-width="1.5" />
<text x="1223.00" y="541.38" font-size="13.8" fill="#e4e4e4" text-anchor="end" font-weight="normal" >300</text>
<line x1="1223.50" y1="504.51" x2="1229.50" y2="504.51" stroke="#a8a8a8" stroke-width="1.5" />
<text x="1223.00" y="509.31" font-size="13.8" fill="#e4e4e4" text-anchor="end" font-weight="normal" >350</text>
<line x1="1223.50" y1="472.44" x2="1229.50" y2="472.44" stroke="#a8a8a8" stroke-width="1.5" />
<text x="1223.00" y="477.24" font-size="13.8" fill="#e4e4e4" text-anchor="end" font-weight="normal" >400</text>
<line x1="1223.50" y1="440.37" x2="1229.50" y2="440.37" stroke="#a8a8a8" stroke-width="1.5" />
<text x="1223.00" y="445.17" font-size="13.8" fill="#e4e4e4" text-anchor="end" font-weight="normal" >450</text>
<line x1="1223.50" y1="408.30" x2="1229.50" y2="408.30" stroke="#a8a8a8" stroke-width="1.5" />
<text x="1223.00" y="413.10" font-size="13.8" fill="#e4e4e4" text-anchor="end" font-weight="normal" >500</text>
<line x1="1229.50" y1="729.00" x2="1229.50" y2="734.50" stroke="#a8a8a8" stroke-width="1.5" />
<text x="1229.50" y="748.30" font-size="13.8" fill="#e4e4e4" text-anchor="middle" font-weight="normal" >0</text>
<line x1="1294.90" y1="729.00" x2="1294.90" y2="734.50" stroke="#a8a8a8" stroke-width="1.5" />
<text x="1294.90" y="748.30" font-size="13.8" fill="#e4e4e4" text-anchor="middle" font-weight="normal" >20</text>
<line x1="1360.30" y1="729.00" x2="1360.30" y2="734.50" stroke="#a8a8a8" stroke-width="1.5" />
<text x="1360.30" y="748.30" font-size="13.8" fill="#e4e4e4" text-anchor="middle" font-weight="normal" >40</text>
<line x1="1425.70" y1="729.00" x2="1425.70" y2="734.50" stroke="#a8a8a8" stroke-width="1.5" />
<text x="1425.70" y="748.30" font-size="13.8" fill="#e4e4e4" text-anchor="middle" font-weight="normal" >60</text>
<line x1="1491.10" y1="729.00" x2="1491.10" y2="734.50" stroke="#a8a8a8" stroke-width="1.5" />
<text x="1491.10" y="748.30" font-size="13.8" fill="#e4e4e4" text-anchor="middle" font-weight="normal" >80</text>
<line x1="1556.50" y1="729.00" x2="1556.50" y2="734.50" stroke="#a8a8a8" stroke-width="1.5" />
<text x="1556.50" y="748.30" font-size="13.8" fill="#e4e4e4" text-anchor="middle" font-weight="normal" >100</text>
<rect x="934.30" y="566.00" width="243.00" height="167.50" fill="#232323" />
<line x1="934.30" y1="580.30" x2="1177.30" y2="580.30" stroke="#9a9a9a" stroke-width="1.5" />
<line x1="934.30" y1="649.30" x2="1177.30" y2="649.30" stroke="#9a9a9a" stroke-width="1.5" />
<line x1="934.30" y1="719.00" x2="1177.30" y2="719.00" stroke="#9a9a9a" stroke-width="1.5" />
<defs>
<linearGradient id="rb" x1="0" y1="0" x2="0" y2="1"><stop offset="0" stop-color="#ff5050"/><stop offset="0.15" stop-color="#ff0000"/><stop offset="0.75" stop-color="#e00000"/><stop offset="1" stop-color="#900000"/></linearGradient>
<linearGradient id="bb" x1="0" y1="0" x2="0" y2="1"><stop offset="0" stop-color="#5050ff"/><stop offset="0.2" stop-color="#0000ff"/><stop offset="0.7" stop-color="#0000e0"/><stop offset="1" stop-color="#000080"/></linearGradient>
</defs>
<rect x="957.8" y="630.8" width="63.6" height="19.2" fill="url(#rb)" stroke="#000" stroke-width="1.2"/>
<line x1="1021.50" y1="649.30" x2="1086.50" y2="649.30" stroke="#10a010" stroke-width="1.4" />
<rect x="1087.8" y="650.4" width="62.6" height="72" fill="url(#bb)" stroke="#000" stroke-width="1.2"/>
<rect x="934.30" y="566.00" width="243.00" height="167.50" fill="none" stroke="#a8a8a8" stroke-width="1.6"/>
<line x1="928.50" y1="580.30" x2="934.30" y2="580.30" stroke="#a8a8a8" stroke-width="1.5" />
<text x="928.00" y="585.10" font-size="13.8" fill="#e4e4e4" text-anchor="end" font-weight="normal" >5</text>
<line x1="928.50" y1="649.30" x2="934.30" y2="649.30" stroke="#a8a8a8" stroke-width="1.5" />
<text x="928.00" y="654.10" font-size="13.8" fill="#e4e4e4" text-anchor="end" font-weight="normal" >0</text>
<line x1="928.50" y1="719.00" x2="934.30" y2="719.00" stroke="#a8a8a8" stroke-width="1.5" />
<text x="928.00" y="723.80" font-size="13.8" fill="#e4e4e4" text-anchor="end" font-weight="normal" >-5</text>
<line x1="934.30" y1="733.50" x2="934.30" y2="739.00" stroke="#a8a8a8" stroke-width="1.5" />
<line x1="1177.30" y1="733.50" x2="1177.30" y2="739.00" stroke="#a8a8a8" stroke-width="1.5" />
<text x="1055.40" y="748.50" font-size="13.8" fill="#e4e4e4" text-anchor="middle" font-weight="normal" >100</text>
<text x="38.20" y="586.80" font-size="17.5" fill="#f0f0f0" text-anchor="start" font-weight="normal" textLength="141.50" lengthAdjust="spacingAndGlyphs" >Current Reading:</text>
<text x="38.20" y="625.20" font-size="24.5" fill="#f6f6f6" text-anchor="start" font-weight="normal" textLength="82.00" lengthAdjust="spacingAndGlyphs" >x: 0,317</text>
<text x="38.20" y="662.20" font-size="24.5" fill="#f6f6f6" text-anchor="start" font-weight="normal" textLength="95.00" lengthAdjust="spacingAndGlyphs" >y: 0,3344</text>
<text x="38.20" y="700.00" font-size="24.5" fill="#f6f6f6" text-anchor="start" font-weight="normal" textLength="103.00" lengthAdjust="spacingAndGlyphs" >fL: 96,677</text>
<text x="38.20" y="738.30" font-size="24.5" fill="#f6f6f6" text-anchor="start" font-weight="normal" textLength="161.00" lengthAdjust="spacingAndGlyphs" >cd/m²: 331,242</text>
<defs><linearGradient id="hdr" x1="0" y1="0" x2="0" y2="1"><stop offset="0" stop-color="#2e2e2e"/><stop offset="0.44" stop-color="#2b2b2b"/><stop offset="0.44" stop-color="#1a1a1a"/><stop offset="1" stop-color="#121212"/></linearGradient></defs>
<rect x="255.00" y="556.40" width="12.00" height="26.30" fill="#000" />
<rect x="267.00" y="556.40" width="636.50" height="26.30" fill="url(#hdr)" />
<rect x="255.00" y="582.70" width="12.00" height="23.70" fill="#222222" />
<rect x="267.00" y="582.70" width="636.50" height="23.70" fill="#464646" />
<rect x="255.00" y="606.40" width="12.00" height="24.40" fill="#202020" />
<rect x="267.00" y="606.40" width="636.50" height="24.40" fill="#797979" />
<rect x="255.00" y="630.80" width="12.00" height="23.80" fill="#222222" />
<rect x="267.00" y="630.80" width="636.50" height="23.80" fill="#464646" />
<rect x="255.00" y="654.60" width="12.00" height="24.20" fill="#202020" />
<rect x="267.00" y="654.60" width="636.50" height="24.20" fill="#797979" />
<rect x="255.00" y="678.80" width="12.00" height="23.70" fill="#222222" />
<rect x="267.00" y="678.80" width="636.50" height="23.70" fill="#464646" />
<rect x="255.00" y="702.50" width="12.00" height="24.30" fill="#202020" />
<rect x="267.00" y="702.50" width="636.50" height="24.30" fill="#797979" />
<text x="273.60" y="575.40" font-size="14.2" fill="#ffffff" text-anchor="start" font-weight="normal" stroke="#ffffff" stroke-width="0.25">30</text>
<text x="326.80" y="575.40" font-size="14.2" fill="#ffffff" text-anchor="start" font-weight="normal" stroke="#ffffff" stroke-width="0.25">35</text>
<text x="379.80" y="575.40" font-size="14.2" fill="#ffffff" text-anchor="start" font-weight="normal" stroke="#ffffff" stroke-width="0.25">40</text>
<text x="432.80" y="575.40" font-size="14.2" fill="#ffffff" text-anchor="start" font-weight="normal" stroke="#ffffff" stroke-width="0.25">45</text>
<text x="486.00" y="575.40" font-size="14.2" fill="#ffffff" text-anchor="start" font-weight="normal" stroke="#ffffff" stroke-width="0.25">50</text>
<text x="539.30" y="575.40" font-size="14.2" fill="#ffffff" text-anchor="start" font-weight="normal" stroke="#ffffff" stroke-width="0.25">55</text>
<text x="600.50" y="575.40" font-size="14.2" fill="#ffffff" text-anchor="start" font-weight="normal" stroke="#ffffff" stroke-width="0.25">60</text>
<text x="661.40" y="575.40" font-size="14.2" fill="#ffffff" text-anchor="start" font-weight="normal" stroke="#ffffff" stroke-width="0.25">65</text>
<text x="722.60" y="575.40" font-size="14.2" fill="#ffffff" text-anchor="start" font-weight="normal" stroke="#ffffff" stroke-width="0.25">70</text>
<text x="784.10" y="575.40" font-size="14.2" fill="#ffffff" text-anchor="start" font-weight="normal" stroke="#ffffff" stroke-width="0.25">75</text>
<text x="845.00" y="575.40" font-size="14.2" fill="#ffffff" text-anchor="start" font-weight="normal" stroke="#ffffff" stroke-width="0.25">80</text>
<text x="273.60" y="600.00" font-size="14.4" fill="#f0f0f0" text-anchor="start" font-weight="normal" >3,815</text>
<text x="326.80" y="600.00" font-size="14.4" fill="#f0f0f0" text-anchor="start" font-weight="normal" >7,244</text>
<text x="379.80" y="600.00" font-size="14.4" fill="#f0f0f0" text-anchor="start" font-weight="normal" >13,038</text>
<text x="432.80" y="600.00" font-size="14.4" fill="#f0f0f0" text-anchor="start" font-weight="normal" >21,896</text>
<text x="486.00" y="600.00" font-size="14.4" fill="#f0f0f0" text-anchor="start" font-weight="normal" >37,063</text>
<text x="539.30" y="600.00" font-size="14.4" fill="#f0f0f0" text-anchor="start" font-weight="normal" >59,466</text>
<text x="600.50" y="600.00" font-size="14.4" fill="#f0f0f0" text-anchor="start" font-weight="normal" >101,673</text>
<text x="661.40" y="600.00" font-size="14.4" fill="#f0f0f0" text-anchor="start" font-weight="normal" >170,431</text>
<text x="722.60" y="600.00" font-size="14.4" fill="#f0f0f0" text-anchor="start" font-weight="normal" >268,869</text>
<text x="784.10" y="600.00" font-size="14.4" fill="#f0f0f0" text-anchor="start" font-weight="normal" >332,564</text>
<text x="845.00" y="600.00" font-size="14.4" fill="#f0f0f0" text-anchor="start" font-weight="normal" >333,059</text>
<text x="273.60" y="623.70" font-size="14.4" fill="#e8e8e8" text-anchor="start" font-weight="normal" >0,317</text>
<text x="326.80" y="623.70" font-size="14.4" fill="#e8e8e8" text-anchor="start" font-weight="normal" >0,319</text>
<text x="379.80" y="623.70" font-size="14.4" fill="#e8e8e8" text-anchor="start" font-weight="normal" >0,318</text>
<text x="432.80" y="623.70" font-size="14.4" fill="#e8e8e8" text-anchor="start" font-weight="normal" >0,318</text>
<text x="486.00" y="623.70" font-size="14.4" fill="#e8e8e8" text-anchor="start" font-weight="normal" >0,317</text>
<text x="539.30" y="623.70" font-size="14.4" fill="#e8e8e8" text-anchor="start" font-weight="normal" >0,316</text>
<text x="600.50" y="623.70" font-size="14.4" fill="#e8e8e8" text-anchor="start" font-weight="normal" >0,317</text>
<text x="661.40" y="623.70" font-size="14.4" fill="#e8e8e8" text-anchor="start" font-weight="normal" >0,317</text>
<text x="722.60" y="623.70" font-size="14.4" fill="#e8e8e8" text-anchor="start" font-weight="normal" >0,317</text>
<text x="784.10" y="623.70" font-size="14.4" fill="#e8e8e8" text-anchor="start" font-weight="normal" >0,317</text>
<text x="845.00" y="623.70" font-size="14.4" fill="#e8e8e8" text-anchor="start" font-weight="normal" >0,317</text>
<text x="273.60" y="648.10" font-size="14.4" fill="#f0f0f0" text-anchor="start" font-weight="normal" >0,331</text>
<text x="326.80" y="648.10" font-size="14.4" fill="#f0f0f0" text-anchor="start" font-weight="normal" >0,332</text>
<text x="379.80" y="648.10" font-size="14.4" fill="#f0f0f0" text-anchor="start" font-weight="normal" >0,332</text>
<text x="432.80" y="648.10" font-size="14.4" fill="#f0f0f0" text-anchor="start" font-weight="normal" >0,331</text>
<text x="486.00" y="648.10" font-size="14.4" fill="#f0f0f0" text-anchor="start" font-weight="normal" >0,331</text>
<text x="539.30" y="648.10" font-size="14.4" fill="#f0f0f0" text-anchor="start" font-weight="normal" >0,330</text>
<text x="600.50" y="648.10" font-size="14.4" fill="#f0f0f0" text-anchor="start" font-weight="normal" >0,331</text>
<text x="661.40" y="648.10" font-size="14.4" fill="#f0f0f0" text-anchor="start" font-weight="normal" >0,332</text>
<text x="722.60" y="648.10" font-size="14.4" fill="#f0f0f0" text-anchor="start" font-weight="normal" >0,334</text>
<text x="784.10" y="648.10" font-size="14.4" fill="#f0f0f0" text-anchor="start" font-weight="normal" >0,334</text>
<text x="845.00" y="648.10" font-size="14.4" fill="#f0f0f0" text-anchor="start" font-weight="normal" >0,334</text>
<text x="273.60" y="671.90" font-size="14.4" fill="#e8e8e8" text-anchor="start" font-weight="normal" >10,214</text>
<text x="326.80" y="671.90" font-size="14.4" fill="#e8e8e8" text-anchor="start" font-weight="normal" >18,781</text>
<text x="379.80" y="671.90" font-size="14.4" fill="#e8e8e8" text-anchor="start" font-weight="normal" >33,104</text>
<text x="432.80" y="671.90" font-size="14.4" fill="#e8e8e8" text-anchor="start" font-weight="normal" >56,554</text>
<text x="486.00" y="671.90" font-size="14.4" fill="#e8e8e8" text-anchor="start" font-weight="normal" >94,378</text>
<text x="539.30" y="671.90" font-size="14.4" fill="#e8e8e8" text-anchor="start" font-weight="normal" >148,034</text>
<text x="600.50" y="671.90" font-size="14.4" fill="#e8e8e8" text-anchor="start" font-weight="normal" >239,811</text>
<text x="661.40" y="671.90" font-size="14.4" fill="#e8e8e8" text-anchor="start" font-weight="normal" >331,242</text>
<text x="722.60" y="671.90" font-size="14.4" fill="#e8e8e8" text-anchor="start" font-weight="normal" >331,242</text>
<text x="784.10" y="671.90" font-size="14.4" fill="#e8e8e8" text-anchor="start" font-weight="normal" >331,242</text>
<text x="845.00" y="671.90" font-size="14.4" fill="#e8e8e8" text-anchor="start" font-weight="normal" >331,242</text>
<text x="273.60" y="696.10" font-size="14.4" fill="#f0f0f0" text-anchor="start" font-weight="normal" >0,313</text>
<text x="326.80" y="696.10" font-size="14.4" fill="#f0f0f0" text-anchor="start" font-weight="normal" >0,313</text>
<text x="379.80" y="696.10" font-size="14.4" fill="#f0f0f0" text-anchor="start" font-weight="normal" >0,313</text>
<text x="432.80" y="696.10" font-size="14.4" fill="#f0f0f0" text-anchor="start" font-weight="normal" >0,313</text>
<text x="486.00" y="696.10" font-size="14.4" fill="#f0f0f0" text-anchor="start" font-weight="normal" >0,313</text>
<text x="539.30" y="696.10" font-size="14.4" fill="#f0f0f0" text-anchor="start" font-weight="normal" >0,313</text>
<text x="600.50" y="696.10" font-size="14.4" fill="#f0f0f0" text-anchor="start" font-weight="normal" >0,313</text>
<text x="661.40" y="696.10" font-size="14.4" fill="#f0f0f0" text-anchor="start" font-weight="normal" >0,313</text>
<text x="722.60" y="696.10" font-size="14.4" fill="#f0f0f0" text-anchor="start" font-weight="normal" >0,313</text>
<text x="784.10" y="696.10" font-size="14.4" fill="#f0f0f0" text-anchor="start" font-weight="normal" >0,313</text>
<text x="845.00" y="696.10" font-size="14.4" fill="#f0f0f0" text-anchor="start" font-weight="normal" >0,313</text>
<text x="273.60" y="719.80" font-size="14.4" fill="#e8e8e8" text-anchor="start" font-weight="normal" >0,329</text>
<text x="326.80" y="719.80" font-size="14.4" fill="#e8e8e8" text-anchor="start" font-weight="normal" >0,329</text>
<text x="379.80" y="719.80" font-size="14.4" fill="#e8e8e8" text-anchor="start" font-weight="normal" >0,329</text>
<text x="432.80" y="719.80" font-size="14.4" fill="#e8e8e8" text-anchor="start" font-weight="normal" >0,329</text>
<text x="486.00" y="719.80" font-size="14.4" fill="#e8e8e8" text-anchor="start" font-weight="normal" >0,329</text>
<text x="539.30" y="719.80" font-size="14.4" fill="#e8e8e8" text-anchor="start" font-weight="normal" >0,329</text>
<text x="600.50" y="719.80" font-size="14.4" fill="#e8e8e8" text-anchor="start" font-weight="normal" >0,329</text>
<text x="661.40" y="719.80" font-size="14.4" fill="#e8e8e8" text-anchor="start" font-weight="normal" >0,329</text>
<text x="722.60" y="719.80" font-size="14.4" fill="#e8e8e8" text-anchor="start" font-weight="normal" >0,329</text>
<text x="784.10" y="719.80" font-size="14.4" fill="#e8e8e8" text-anchor="start" font-weight="normal" >0,329</text>
<text x="845.00" y="719.80" font-size="14.4" fill="#e8e8e8" text-anchor="start" font-weight="normal" >0,329</text>
<defs><linearGradient id="trk" x1="0" y1="0" x2="0" y2="1"><stop offset="0" stop-color="#505050"/><stop offset="1" stop-color="#626262"/></linearGradient></defs>
<rect x="267.00" y="726.80" width="636.50" height="15.20" fill="url(#trk)" />
<rect x="267.5" y="727.8" width="13" height="13" rx="2" fill="#7a7a7a"/>
<path d="M276.5 729.8 L276.5 738.8 L271.5 734.3 Z" fill="#2a2a2a"/>
<rect x="461" y="728.3" width="309" height="12.5" rx="6" fill="#444444"/>
<rect x="889.5" y="727.8" width="13" height="13" rx="2" fill="#7a7a7a"/>
<path d="M894.5 729.8 L894.5 738.8 L899.5 734.3 Z" fill="#2a2a2a"/>
<defs>
<linearGradient id="btn" x1="0" y1="0" x2="0" y2="1"><stop offset="0" stop-color="#a6a6a6"/><stop offset="0.08" stop-color="#9a9a9a"/><stop offset="1" stop-color="#6c6c6c"/></linearGradient>
<linearGradient id="btnsel" x1="0" y1="0" x2="0" y2="1"><stop offset="0" stop-color="#242424"/><stop offset="1" stop-color="#3a3a3a"/></linearGradient>
<linearGradient id="btn2" x1="0" y1="0" x2="0" y2="1"><stop offset="0" stop-color="#b0b0b0"/><stop offset="0.1" stop-color="#a2a2a2"/><stop offset="1" stop-color="#707070"/></linearGradient>
<linearGradient id="dark" x1="0" y1="0" x2="0" y2="1"><stop offset="0" stop-color="#3e3e3e"/><stop offset="1" stop-color="#353535"/></linearGradient>
<linearGradient id="circ" x1="0" y1="0" x2="0" y2="1"><stop offset="0" stop-color="#808080"/><stop offset="1" stop-color="#b8b8b8"/></linearGradient>
<linearGradient id="sbar" x1="0" y1="0" x2="0" y2="1"><stop offset="0" stop-color="#555"/><stop offset="1" stop-color="#444"/></linearGradient>
</defs>
<rect x="0.00" y="757.50" width="1600.00" height="56.50" fill="#333333" />
<rect x="1.00" y="758" width="59.8" height="45.3" rx="2.5" fill="url(#btn)"/>
<rect x="5.60" y="762.2" width="50.5" height="22.6" rx="2.5" fill="rgb(0,0,0)" stroke="#7a7a7a" stroke-width="0.8"/>
<path d="M6.20 763.6 Q6.20 762.6 8.00 762.6 L54.30 762.6 Q55.50 762.6 55.50 763.6" fill="none" stroke="#000" stroke-opacity="0.35" stroke-width="1.2"/>
<text x="30.90" y="800.20" font-size="10.5" fill="#232323" text-anchor="middle" font-weight="bold" >0</text>
<rect x="62.75" y="758" width="59.8" height="45.3" rx="2.5" fill="url(#btn)"/>
<rect x="67.35" y="762.2" width="50.5" height="22.6" rx="2.5" fill="rgb(13,13,13)" stroke="#7a7a7a" stroke-width="0.8"/>
<path d="M67.95 763.6 Q67.95 762.6 69.75 762.6 L116.05 762.6 Q117.25 762.6 117.25 763.6" fill="none" stroke="#000" stroke-opacity="0.35" stroke-width="1.2"/>
<text x="92.65" y="800.20" font-size="10.5" fill="#232323" text-anchor="middle" font-weight="bold" >5</text>
<rect x="124.50" y="758" width="59.8" height="45.3" rx="2.5" fill="url(#btn)"/>
<rect x="129.10" y="762.2" width="50.5" height="22.6" rx="2.5" fill="rgb(26,26,26)" stroke="#7a7a7a" stroke-width="0.8"/>
<path d="M129.70 763.6 Q129.70 762.6 131.50 762.6 L177.80 762.6 Q179.00 762.6 179.00 763.6" fill="none" stroke="#000" stroke-opacity="0.35" stroke-width="1.2"/>
<text x="154.40" y="800.20" font-size="10.5" fill="#232323" text-anchor="middle" font-weight="bold" >10</text>
<rect x="186.25" y="758" width="59.8" height="45.3" rx="2.5" fill="url(#btn)"/>
<rect x="190.85" y="762.2" width="50.5" height="22.6" rx="2.5" fill="rgb(38,38,38)" stroke="#7a7a7a" stroke-width="0.8"/>
<path d="M191.45 763.6 Q191.45 762.6 193.25 762.6 L239.55 762.6 Q240.75 762.6 240.75 763.6" fill="none" stroke="#000" stroke-opacity="0.35" stroke-width="1.2"/>
<text x="216.15" y="800.20" font-size="10.5" fill="#232323" text-anchor="middle" font-weight="bold" >15</text>
<rect x="248.00" y="758" width="59.8" height="45.3" rx="2.5" fill="url(#btn)"/>
<rect x="252.60" y="762.2" width="50.5" height="22.6" rx="2.5" fill="rgb(51,51,51)" stroke="#7a7a7a" stroke-width="0.8"/>
<path d="M253.20 763.6 Q253.20 762.6 255.00 762.6 L301.30 762.6 Q302.50 762.6 302.50 763.6" fill="none" stroke="#000" stroke-opacity="0.35" stroke-width="1.2"/>
<text x="277.90" y="800.20" font-size="10.5" fill="#232323" text-anchor="middle" font-weight="bold" >20</text>
<rect x="309.75" y="758" width="59.8" height="45.3" rx="2.5" fill="url(#btn)"/>
<rect x="314.35" y="762.2" width="50.5" height="22.6" rx="2.5" fill="rgb(64,64,64)" stroke="#7a7a7a" stroke-width="0.8"/>
<path d="M314.95 763.6 Q314.95 762.6 316.75 762.6 L363.05 762.6 Q364.25 762.6 364.25 763.6" fill="none" stroke="#000" stroke-opacity="0.35" stroke-width="1.2"/>
<text x="339.65" y="800.20" font-size="10.5" fill="#232323" text-anchor="middle" font-weight="bold" >25</text>
<rect x="371.50" y="758" width="59.8" height="45.3" rx="2.5" fill="url(#btn)"/>
<rect x="376.10" y="762.2" width="50.5" height="22.6" rx="2.5" fill="rgb(76,76,76)" stroke="#7a7a7a" stroke-width="0.8"/>
<path d="M376.70 763.6 Q376.70 762.6 378.50 762.6 L424.80 762.6 Q426.00 762.6 426.00 763.6" fill="none" stroke="#000" stroke-opacity="0.35" stroke-width="1.2"/>
<text x="401.40" y="800.20" font-size="10.5" fill="#232323" text-anchor="middle" font-weight="bold" >30</text>
<rect x="433.25" y="758" width="59.8" height="45.3" rx="2.5" fill="url(#btn)"/>
<rect x="437.85" y="762.2" width="50.5" height="22.6" rx="2.5" fill="rgb(89,89,89)" stroke="#7a7a7a" stroke-width="0.8"/>
<path d="M438.45 763.6 Q438.45 762.6 440.25 762.6 L486.55 762.6 Q487.75 762.6 487.75 763.6" fill="none" stroke="#000" stroke-opacity="0.35" stroke-width="1.2"/>
<text x="463.15" y="800.20" font-size="10.5" fill="#232323" text-anchor="middle" font-weight="bold" >35</text>
<rect x="495.00" y="758" width="59.8" height="45.3" rx="2.5" fill="url(#btn)"/>
<rect x="499.60" y="762.2" width="50.5" height="22.6" rx="2.5" fill="rgb(102,102,102)" stroke="#7a7a7a" stroke-width="0.8"/>
<path d="M500.20 763.6 Q500.20 762.6 502.00 762.6 L548.30 762.6 Q549.50 762.6 549.50 763.6" fill="none" stroke="#000" stroke-opacity="0.35" stroke-width="1.2"/>
<text x="524.90" y="800.20" font-size="10.5" fill="#232323" text-anchor="middle" font-weight="bold" >40</text>
<rect x="556.75" y="758" width="59.8" height="45.3" rx="2.5" fill="url(#btn)"/>
<rect x="561.35" y="762.2" width="50.5" height="22.6" rx="2.5" fill="rgb(115,115,115)" stroke="#7a7a7a" stroke-width="0.8"/>
<path d="M561.95 763.6 Q561.95 762.6 563.75 762.6 L610.05 762.6 Q611.25 762.6 611.25 763.6" fill="none" stroke="#000" stroke-opacity="0.35" stroke-width="1.2"/>
<text x="586.65" y="800.20" font-size="10.5" fill="#232323" text-anchor="middle" font-weight="bold" >45</text>
<rect x="618.50" y="758" width="59.8" height="45.3" rx="2.5" fill="url(#btn)"/>
<rect x="623.10" y="762.2" width="50.5" height="22.6" rx="2.5" fill="rgb(128,128,128)" stroke="#7a7a7a" stroke-width="0.8"/>
<path d="M623.70 763.6 Q623.70 762.6 625.50 762.6 L671.80 762.6 Q673.00 762.6 673.00 763.6" fill="none" stroke="#000" stroke-opacity="0.35" stroke-width="1.2"/>
<text x="648.40" y="800.20" font-size="10.5" fill="#232323" text-anchor="middle" font-weight="bold" >50</text>
<rect x="680.25" y="758" width="59.8" height="45.3" rx="2.5" fill="url(#btn)"/>
<rect x="684.85" y="762.2" width="50.5" height="22.6" rx="2.5" fill="rgb(140,140,140)" stroke="#7a7a7a" stroke-width="0.8"/>
<path d="M685.45 763.6 Q685.45 762.6 687.25 762.6 L733.55 762.6 Q734.75 762.6 734.75 763.6" fill="none" stroke="#000" stroke-opacity="0.35" stroke-width="1.2"/>
<text x="710.15" y="800.20" font-size="10.5" fill="#232323" text-anchor="middle" font-weight="bold" >55</text>
<rect x="742.00" y="758" width="59.8" height="45.3" rx="2.5" fill="url(#btn)"/>
<rect x="746.60" y="762.2" width="50.5" height="22.6" rx="2.5" fill="rgb(153,153,153)" stroke="#7a7a7a" stroke-width="0.8"/>
<path d="M747.20 763.6 Q747.20 762.6 749.00 762.6 L795.30 762.6 Q796.50 762.6 796.50 763.6" fill="none" stroke="#000" stroke-opacity="0.35" stroke-width="1.2"/>
<text x="771.90" y="800.20" font-size="10.5" fill="#232323" text-anchor="middle" font-weight="bold" >60</text>
<rect x="803.75" y="758" width="59.8" height="45.3" rx="2.5" fill="url(#btn)"/>
<rect x="808.35" y="762.2" width="50.5" height="22.6" rx="2.5" fill="rgb(166,166,166)" stroke="#7a7a7a" stroke-width="0.8"/>
<path d="M808.95 763.6 Q808.95 762.6 810.75 762.6 L857.05 762.6 Q858.25 762.6 858.25 763.6" fill="none" stroke="#000" stroke-opacity="0.35" stroke-width="1.2"/>
<text x="833.65" y="800.20" font-size="10.5" fill="#232323" text-anchor="middle" font-weight="bold" >65</text>
<rect x="865.50" y="758" width="59.8" height="45.3" rx="2.5" fill="url(#btn)"/>
<rect x="870.10" y="762.2" width="50.5" height="22.6" rx="2.5" fill="rgb(178,178,178)" stroke="#7a7a7a" stroke-width="0.8"/>
<path d="M870.70 763.6 Q870.70 762.6 872.50 762.6 L918.80 762.6 Q920.00 762.6 920.00 763.6" fill="none" stroke="#000" stroke-opacity="0.35" stroke-width="1.2"/>
<text x="895.40" y="800.20" font-size="10.5" fill="#232323" text-anchor="middle" font-weight="bold" >70</text>
<rect x="927.25" y="758" width="59.8" height="45.3" rx="2.5" fill="url(#btn)"/>
<rect x="931.85" y="762.2" width="50.5" height="22.6" rx="2.5" fill="rgb(191,191,191)" stroke="#7a7a7a" stroke-width="0.8"/>
<path d="M932.45 763.6 Q932.45 762.6 934.25 762.6 L980.55 762.6 Q981.75 762.6 981.75 763.6" fill="none" stroke="#000" stroke-opacity="0.35" stroke-width="1.2"/>
<text x="957.15" y="800.20" font-size="10.5" fill="#232323" text-anchor="middle" font-weight="bold" >75</text>
<rect x="989.00" y="758" width="59.8" height="45.3" rx="2.5" fill="url(#btn)"/>
<rect x="993.60" y="762.2" width="50.5" height="22.6" rx="2.5" fill="rgb(204,204,204)" stroke="#7a7a7a" stroke-width="0.8"/>
<path d="M994.20 763.6 Q994.20 762.6 996.00 762.6 L1042.30 762.6 Q1043.50 762.6 1043.50 763.6" fill="none" stroke="#000" stroke-opacity="0.35" stroke-width="1.2"/>
<text x="1018.90" y="800.20" font-size="10.5" fill="#232323" text-anchor="middle" font-weight="bold" >80</text>
<rect x="1050.75" y="758" width="59.8" height="45.3" rx="2.5" fill="url(#btn)"/>
<rect x="1055.35" y="762.2" width="50.5" height="22.6" rx="2.5" fill="rgb(217,217,217)" stroke="#7a7a7a" stroke-width="0.8"/>
<path d="M1055.95 763.6 Q1055.95 762.6 1057.75 762.6 L1104.05 762.6 Q1105.25 762.6 1105.25 763.6" fill="none" stroke="#000" stroke-opacity="0.35" stroke-width="1.2"/>
<text x="1080.65" y="800.20" font-size="10.5" fill="#232323" text-anchor="middle" font-weight="bold" >85</text>
<rect x="1112.50" y="758" width="59.8" height="45.3" rx="2.5" fill="url(#btn)"/>
<rect x="1117.10" y="762.2" width="50.5" height="22.6" rx="2.5" fill="rgb(230,230,230)" stroke="#7a7a7a" stroke-width="0.8"/>
<path d="M1117.70 763.6 Q1117.70 762.6 1119.50 762.6 L1165.80 762.6 Q1167.00 762.6 1167.00 763.6" fill="none" stroke="#000" stroke-opacity="0.35" stroke-width="1.2"/>
<text x="1142.40" y="800.20" font-size="10.5" fill="#232323" text-anchor="middle" font-weight="bold" >90</text>
<rect x="1174.25" y="758" width="59.8" height="45.3" rx="2.5" fill="url(#btn)"/>
<rect x="1178.85" y="762.2" width="50.5" height="22.6" rx="2.5" fill="rgb(242,242,242)" stroke="#7a7a7a" stroke-width="0.8"/>
<path d="M1179.45 763.6 Q1179.45 762.6 1181.25 762.6 L1227.55 762.6 Q1228.75 762.6 1228.75 763.6" fill="none" stroke="#000" stroke-opacity="0.35" stroke-width="1.2"/>
<text x="1204.15" y="800.20" font-size="10.5" fill="#232323" text-anchor="middle" font-weight="bold" >95</text>
<rect x="1236.00" y="758" width="59.8" height="45.3" rx="2.5" fill="url(#btnsel)"/>
<rect x="1240.60" y="762.2" width="50.5" height="22.6" rx="2.5" fill="rgb(255,255,255)" stroke="#2a2a2a" stroke-width="0.8"/>
<path d="M1241.20 763.6 Q1241.20 762.6 1243.00 762.6 L1289.30 762.6 Q1290.50 762.6 1290.50 763.6" fill="none" stroke="#000" stroke-opacity="0.35" stroke-width="1.2"/>
<text x="1265.90" y="800.20" font-size="10.5" fill="#ffffff" text-anchor="middle" font-weight="bold" >100</text>
<rect x="0.00" y="804.20" width="1297.00" height="9.80" fill="url(#sbar)" />
<rect x="1" y="804.8" width="10" height="9.2" rx="1.5" fill="#7a7a7a"/>
<path d="M8.5 806 L8.5 813 L4 809.5 Z" fill="#3a3a3a"/>
<rect x="1287.5" y="804.8" width="9" height="9.2" rx="1.5" fill="#6a6a6a"/>
<path d="M1290 806 L1290 813 L1294.5 809.5 Z" fill="#3a3a3a"/>
<rect x="1297.8" y="758" width="45" height="16.6" rx="2" fill="url(#btn)"/>
<circle cx="1320" cy="765.5" r="7" fill="#7a7a7a" opacity="0.55"/>
<path d="M1316.3 768 L1323.7 768 L1320 764 Z" fill="#1e1e1e"/>
<rect x="1297.8" y="775.2" width="45" height="38.8" rx="1" fill="url(#btn)"/>
<rect x="1306.5" y="781.5" width="27.2" height="27" rx="4" fill="#b8b8b8" stroke="#151515" stroke-width="2.6"/>
<rect x="1307.8" y="795" width="24.6" height="12.2" rx="2" fill="#a8a8a8"/>
<rect x="1314" y="788.9" width="12.9" height="12.5" fill="#000"/>
<rect x="1343.80" y="758" width="43.40" height="27.6" fill="url(#btn2)"/>
<rect x="1388.00" y="758" width="41.20" height="27.6" fill="url(#btn2)"/>
<rect x="1430.00" y="758" width="41.20" height="27.6" fill="url(#btn2)"/>
<rect x="1472.00" y="758" width="40.90" height="27.6" fill="url(#btn2)"/>
<rect x="1513.00" y="758" width="42.40" height="27.6" fill="url(#dark)"/>
<rect x="1556.20" y="758" width="42.60" height="27.6" fill="url(#dark)"/>
<line x1="1387.60" y1="758.00" x2="1387.60" y2="785.60" stroke="#1a1a1a" stroke-width="1" />
<line x1="1429.60" y1="758.00" x2="1429.60" y2="785.60" stroke="#1a1a1a" stroke-width="1" />
<line x1="1471.60" y1="758.00" x2="1471.60" y2="785.60" stroke="#1a1a1a" stroke-width="1" />
<circle cx="1365.4" cy="771.7" r="9" fill="url(#circ)" opacity="0.75"/>
<circle cx="1408.2" cy="771.7" r="9" fill="url(#circ)" opacity="0.75"/>
<circle cx="1450.4" cy="771.7" r="9" fill="url(#circ)" opacity="0.75"/>
<circle cx="1492.4" cy="771.7" r="9" fill="url(#circ)" opacity="0.75"/>
<rect x="1361.5" y="768.2" width="7.5" height="7" fill="#1e1e1e"/>
<path d="M1405.6 768.6 L1405.6 777 L1413.5 772.8 Z" fill="#1e1e1e"/>
<path d="M1447.3 767.8 L1445.3 767.8 L1445.3 776.8 L1447.3 776.8" fill="none" stroke="#1e1e1e" stroke-width="1.9"/>
<path d="M1453.5 767.8 L1455.5 767.8 L1455.5 776.8 L1453.5 776.8" fill="none" stroke="#1e1e1e" stroke-width="1.9"/>
<rect x="1448.2" y="771" width="1.4" height="1.4" fill="#1e1e1e"/><rect x="1451.2" y="771" width="1.4" height="1.4" fill="#1e1e1e"/>
<path d="M1492.6 771.6 C1490.5 768.8 1486.6 768.8 1486.6 771.6 C1486.6 774.4 1490.5 774.4 1492.6 771.6 C1494.7 768.8 1498.6 768.8 1498.6 771.6 C1498.6 774.4 1494.7 774.4 1492.6 771.6 Z" fill="none" stroke="#1e1e1e" stroke-width="1.7"/>
<circle cx="1535" cy="771.6" r="9" fill="#343434"/>
<path d="M1530.6 771 A4.6 4.6 0 0 1 1538.8 768.9" fill="none" stroke="#151515" stroke-width="2.1"/><path d="M1536.6 767.2 L1540.6 767.4 L1540.2 771.2 Z" fill="#151515"/>
<path d="M1539.6 772.2 A4.6 4.6 0 0 1 1531.4 774.3" fill="none" stroke="#151515" stroke-width="2.1"/><path d="M1533.4 776 L1529.4 775.8 L1529.8 772 Z" fill="#151515"/>
<circle cx="1578" cy="771.7" r="8.8" fill="#404040"/>
<rect x="1344" y="787" width="127.2" height="27" rx="2" fill="url(#btn2)"/>
<rect x="1472" y="787" width="126.8" height="27" rx="2.5" fill="url(#btn2)"/>
<line x1="1471.60" y1="786.50" x2="1471.60" y2="814.00" stroke="#1a1a1a" stroke-width="1" />
<circle cx="1372.4" cy="801" r="9.2" fill="url(#circ)" opacity="0.75"/>
<circle cx="1572.0" cy="801" r="9.2" fill="url(#circ)" opacity="0.75"/>
<path d="M1372.2 797 L1368.6 801 L1372.2 805 M1376.2 797 L1372.6 801 L1376.2 805" fill="none" stroke="#222" stroke-width="1.5"/>
<path d="M1568.6 797 L1572.2 801 L1568.6 805 M1572.6 797 L1576.2 801 L1572.6 805" fill="none" stroke="#222" stroke-width="1.5"/>
<text x="1398.20" y="808.00" font-size="20.6" fill="#2a2a2a" text-anchor="start" font-weight="bold" textLength="46.30" lengthAdjust="spacingAndGlyphs" >Back</text>
<text x="1498.00" y="808.00" font-size="20.6" fill="#2a2a2a" text-anchor="start" font-weight="bold" textLength="48.20" lengthAdjust="spacingAndGlyphs" >Next</text>
</svg>
</body></html>
